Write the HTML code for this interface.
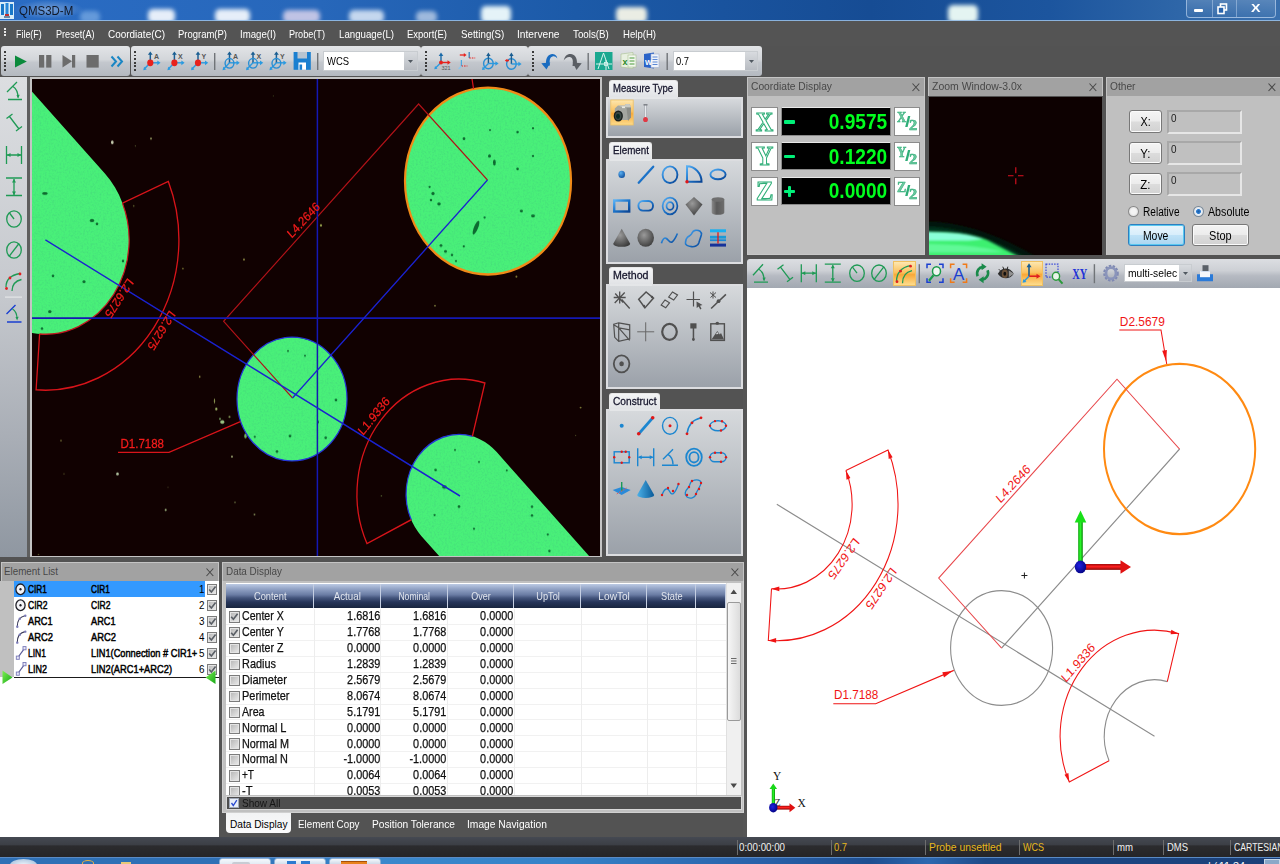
<!DOCTYPE html><html><head><meta charset="utf-8"><title>QMS3D-M</title><style>
*{box-sizing:border-box;margin:0;padding:0}
html,body{width:1280px;height:864px;overflow:hidden;background:#535353;font-family:"Liberation Sans",sans-serif;}
#app{position:absolute;left:0;top:0;width:1280px;height:864px;overflow:hidden;background:#535353}
#app div{position:absolute}
.t{position:absolute;white-space:nowrap;line-height:1;color:#000}
svg{position:absolute;overflow:visible}
.ph{background:#a2a2a2;border:1px solid #c4c4c4;border-bottom:none}
.pb{background:#c0c0c0}
.tab{background:linear-gradient(#f4f5f6,#dfe1e4);border:1px solid #e8e8e8;border-bottom:none;border-radius:3px 3px 0 0}
.box{background:linear-gradient(#d6d9dc,#9ba1a9);border:2px solid #dcdde0}
</style></head><body><div id="app">
<!-- s_top -->
<div style="left:0px;top:0px;width:1280px;height:21px;overflow:hidden;background:linear-gradient(90deg,#2a6cc4 0%,#2767ba 25%,#1c5aa8 45%,#164c94 68%,#1c559e 82%,#2e66a8 92%,#3a70ae 100%);"><div style="left:80px;top:11px;width:20px;height:12px;background:rgba(140,185,235,.6);border-radius:5px;filter:blur(2.2px)"></div><div style="left:148px;top:9px;width:27px;height:14px;background:rgba(240,246,252,.95);border-radius:5px;filter:blur(2.2px)"></div><div style="left:215px;top:9px;width:35px;height:14px;background:rgba(240,246,252,.95);border-radius:5px;filter:blur(2.2px)"></div><div style="left:283px;top:10px;width:37px;height:13px;background:rgba(218,212,236,.85);border-radius:5px;filter:blur(2.2px)"></div><div style="left:349px;top:10px;width:35px;height:13px;background:rgba(225,235,248,.85);border-radius:5px;filter:blur(2.2px)"></div><div style="left:416px;top:11px;width:21px;height:12px;background:rgba(200,215,235,.75);border-radius:5px;filter:blur(2.2px)"></div><div style="left:481px;top:6px;width:30px;height:17px;background:rgba(235,248,250,.97);border-radius:5px;filter:blur(2.2px)"></div><div style="left:616px;top:7px;width:31px;height:16px;background:rgba(246,246,232,.95);border-radius:5px;filter:blur(2.2px)"></div><div style="left:948px;top:5px;width:30px;height:18px;background:rgba(235,250,245,.97);border-radius:5px;filter:blur(2.2px)"></div><div style="left:14px;top:0px;width:70px;height:19px;background:radial-gradient(ellipse at center,rgba(255,255,255,.35),rgba(255,255,255,0) 70%)"></div></div><div style="left:0px;top:19.5px;width:1280px;height:1.1px;background:rgba(150,188,228,.9)"></div><div style="left:0px;top:20.6px;width:1280px;height:0.6px;background:#34404e"></div><svg style="left:0;top:2px" width="14" height="17" viewBox="0 0 14 17"><rect x="0" y="0" width="14" height="17" fill="#d8ecf8"/><rect x="1" y="2" width="3" height="11" fill="#1a78c8"/><rect x="5.5" y="1" width="3" height="11" fill="#2a88d8"/><rect x="10" y="2" width="3" height="11" fill="#1a78c8"/><rect x="5" y="12" width="4" height="2" fill="#c03030"/><rect x="4" y="14" width="6" height="2" fill="#6a8aa8"/></svg><span class="t" style="top:4.00px;font-size:13px;left:18.80px;transform-origin:0 0;transform:scaleX(0.883);color:#101828;">QMS3D-M</span><div style="left:1186px;top:-3px;width:90px;height:21px;border:1px solid rgba(200,220,245,.6);border-radius:0 0 4px 4px;background:linear-gradient(rgba(255,255,255,.18),rgba(255,255,255,.03))"></div><div style="left:1212px;top:0px;width:1px;height:17px;background:rgba(200,220,245,.45)"></div><div style="left:1236px;top:0px;width:1px;height:17px;background:rgba(200,220,245,.45)"></div><div style="left:1194px;top:9px;width:9px;height:3px;background:#fff;border-radius:1px"></div><svg style="left:1217px;top:3px" width="12" height="12" viewBox="0 0 12 12"><rect x="3.5" y="1" width="6" height="6" fill="none" stroke="#fff" stroke-width="1.6"/><rect x="1" y="4" width="6" height="6.5" fill="#2a64ac" stroke="#fff" stroke-width="1.6"/></svg><span class="t" style="top:3.29px;font-size:11px;left:1252.33px;transform-origin:50% 0;transform:scaleX(1.295);color:#fff;font-weight:bold;">X</span><div style="left:0px;top:21px;width:1280px;height:25px;background:#545454"></div><div style="left:4px;top:28px;width:2px;height:2px;background:#e8e8e8"></div><div style="left:4px;top:31px;width:2px;height:2px;background:#e8e8e8"></div><div style="left:4px;top:34px;width:2px;height:2px;background:#e8e8e8"></div><span class="t" style="top:28.59px;font-size:11px;left:15.60px;transform-origin:0 0;transform:scaleX(0.809);color:#fff;">File(F)</span><span class="t" style="top:28.59px;font-size:11px;left:55.50px;transform-origin:0 0;transform:scaleX(0.829);color:#fff;">Preset(A)</span><span class="t" style="top:28.59px;font-size:11px;left:107.50px;transform-origin:0 0;transform:scaleX(0.905);color:#fff;">Coordiate(C)</span><span class="t" style="top:28.59px;font-size:11px;left:177.50px;transform-origin:0 0;transform:scaleX(0.862);color:#fff;">Program(P)</span><span class="t" style="top:28.59px;font-size:11px;left:239.50px;transform-origin:0 0;transform:scaleX(0.879);color:#fff;">Image(I)</span><span class="t" style="top:28.59px;font-size:11px;left:289.00px;transform-origin:0 0;transform:scaleX(0.829);color:#fff;">Probe(T)</span><span class="t" style="top:28.59px;font-size:11px;left:338.80px;transform-origin:0 0;transform:scaleX(0.882);color:#fff;">Language(L)</span><span class="t" style="top:28.59px;font-size:11px;left:407.00px;transform-origin:0 0;transform:scaleX(0.861);color:#fff;">Export(E)</span><span class="t" style="top:28.59px;font-size:11px;left:460.50px;transform-origin:0 0;transform:scaleX(0.885);color:#fff;">Setting(S)</span><span class="t" style="top:28.59px;font-size:11px;left:517.00px;transform-origin:0 0;transform:scaleX(0.927);color:#fff;">Intervene</span><span class="t" style="top:28.59px;font-size:11px;left:573.00px;transform-origin:0 0;transform:scaleX(0.887);color:#fff;">Tools(B)</span><span class="t" style="top:28.59px;font-size:11px;left:622.50px;transform-origin:0 0;transform:scaleX(0.871);color:#fff;">Help(H)</span><div style="left:1px;top:46px;width:129px;height:30px;background:linear-gradient(#e2e4e7 0%,#d3d6da 45%,#c3c7cd 55%,#b4b9c0 100%);border-radius:3px;"></div><div style="left:131px;top:46px;width:290px;height:30px;background:linear-gradient(#e2e4e7 0%,#d3d6da 45%,#c3c7cd 55%,#b4b9c0 100%);border-radius:3px;"></div><div style="left:421px;top:46px;width:107px;height:30px;background:linear-gradient(#e2e4e7 0%,#d3d6da 45%,#c3c7cd 55%,#b4b9c0 100%);border-radius:3px;"></div><div style="left:528px;top:46px;width:233.5px;height:30px;background:linear-gradient(#e2e4e7 0%,#d3d6da 45%,#c3c7cd 55%,#b4b9c0 100%);border-radius:3px;"></div><div style="left:4px;top:51.0px;width:1.6px;height:1.8px;background:#3a3a3a"></div><div style="left:4px;top:54.6px;width:1.6px;height:1.8px;background:#3a3a3a"></div><div style="left:4px;top:58.2px;width:1.6px;height:1.8px;background:#3a3a3a"></div><div style="left:4px;top:61.8px;width:1.6px;height:1.8px;background:#3a3a3a"></div><div style="left:4px;top:65.4px;width:1.6px;height:1.8px;background:#3a3a3a"></div><div style="left:4px;top:69.0px;width:1.6px;height:1.8px;background:#3a3a3a"></div><div style="left:134px;top:51.0px;width:1.6px;height:1.8px;background:#3a3a3a"></div><div style="left:134px;top:54.6px;width:1.6px;height:1.8px;background:#3a3a3a"></div><div style="left:134px;top:58.2px;width:1.6px;height:1.8px;background:#3a3a3a"></div><div style="left:134px;top:61.8px;width:1.6px;height:1.8px;background:#3a3a3a"></div><div style="left:134px;top:65.4px;width:1.6px;height:1.8px;background:#3a3a3a"></div><div style="left:134px;top:69.0px;width:1.6px;height:1.8px;background:#3a3a3a"></div><div style="left:425px;top:51.0px;width:1.6px;height:1.8px;background:#3a3a3a"></div><div style="left:425px;top:54.6px;width:1.6px;height:1.8px;background:#3a3a3a"></div><div style="left:425px;top:58.2px;width:1.6px;height:1.8px;background:#3a3a3a"></div><div style="left:425px;top:61.8px;width:1.6px;height:1.8px;background:#3a3a3a"></div><div style="left:425px;top:65.4px;width:1.6px;height:1.8px;background:#3a3a3a"></div><div style="left:425px;top:69.0px;width:1.6px;height:1.8px;background:#3a3a3a"></div><div style="left:532px;top:51.0px;width:1.6px;height:1.8px;background:#3a3a3a"></div><div style="left:532px;top:54.6px;width:1.6px;height:1.8px;background:#3a3a3a"></div><div style="left:532px;top:58.2px;width:1.6px;height:1.8px;background:#3a3a3a"></div><div style="left:532px;top:61.8px;width:1.6px;height:1.8px;background:#3a3a3a"></div><div style="left:532px;top:65.4px;width:1.6px;height:1.8px;background:#3a3a3a"></div><div style="left:532px;top:69.0px;width:1.6px;height:1.8px;background:#3a3a3a"></div><svg id="tbicons" style="left:0;top:46px" width="760" height="30" viewBox="0 46 760 30"><path d="M15 55.5V67.5L26.8 61.5z" fill="#0b8a3c"/><rect x="39" y="55" width="5.2" height="12.6" fill="#6c6c6c"/><rect x="46.2" y="55" width="5.2" height="12.6" fill="#6c6c6c"/><path d="M62.5 55V67.6L72 61.3z" fill="#6c6c6c"/><rect x="72" y="55" width="3.2" height="12.6" fill="#6c6c6c"/><rect x="86.5" y="55" width="12.2" height="12.6" fill="#6c6c6c"/><path d="M111.5 56.5L116 61.5L111.5 66.5M117.5 56.5L122 61.5L117.5 66.5" fill="none" stroke="#1a86c4" stroke-width="2"/><path d="M148.8 64.3L144.3 69.0" stroke="#2a9ae0" stroke-width="1.4"/><path d="M143.3 70.2l3.4 -.6l-2.6 -2.8z" fill="#2a9ae0"/><path d="M150.3 60.8V53.8" stroke="#1a5e92" stroke-width="1.5"/><path d="M147.9 54.8h4.8l-2.4 -3.4z" fill="#1a5e92"/><path d="M152.3 62.8H158.3" stroke="#2a9ae0" stroke-width="1.4"/><path d="M157.3 60.4v4.8l3.2 -2.4z" fill="#2a9ae0"/><ellipse cx="150.3" cy="62.8" rx="3.1" ry="3.4" fill="#e8211c"/><text x="153.9" y="59.4" font-size="7" font-weight="bold" fill="#555" font-family="Liberation Sans,sans-serif">A</text><path d="M172.9 64.3L168.4 69.0" stroke="#2a9ae0" stroke-width="1.4"/><path d="M167.4 70.2l3.4 -.6l-2.6 -2.8z" fill="#2a9ae0"/><path d="M174.4 60.8V53.8" stroke="#1a5e92" stroke-width="1.5"/><path d="M172.0 54.8h4.8l-2.4 -3.4z" fill="#1a5e92"/><path d="M176.4 62.8H182.4" stroke="#2a9ae0" stroke-width="1.4"/><path d="M181.4 60.4v4.8l3.2 -2.4z" fill="#2a9ae0"/><ellipse cx="174.4" cy="62.8" rx="3.1" ry="3.4" fill="#e8211c"/><text x="178.0" y="59.4" font-size="7" font-weight="bold" fill="#555" font-family="Liberation Sans,sans-serif">X</text><path d="M196.5 64.3L192 69.0" stroke="#2a9ae0" stroke-width="1.4"/><path d="M191 70.2l3.4 -.6l-2.6 -2.8z" fill="#2a9ae0"/><path d="M198 60.8V53.8" stroke="#1a5e92" stroke-width="1.5"/><path d="M195.6 54.8h4.8l-2.4 -3.4z" fill="#1a5e92"/><path d="M200 62.8H206" stroke="#2a9ae0" stroke-width="1.4"/><path d="M205 60.4v4.8l3.2 -2.4z" fill="#2a9ae0"/><ellipse cx="198" cy="62.8" rx="3.1" ry="3.4" fill="#e8211c"/><text x="201.6" y="59.4" font-size="7" font-weight="bold" fill="#555" font-family="Liberation Sans,sans-serif">Y</text><rect x="214" y="53" width="1.4" height="17" fill="#707478"/><path d="M229.5 62.8L223.5 69.0" stroke="#2a9ae0" stroke-width="1.4"/><path d="M222.5 70.2l3.4 -.6l-2.6 -2.8z" fill="#2a9ae0"/><path d="M229.5 62.8V53.8" stroke="#1a5e92" stroke-width="1.5"/><path d="M227.1 54.8h4.8l-2.4 -3.4z" fill="#1a5e92"/><path d="M229.5 62.8H237.5" stroke="#2a9ae0" stroke-width="1.4"/><path d="M236.5 60.4v4.8l3.2 -2.4z" fill="#2a9ae0"/><ellipse cx="229.5" cy="63.3" rx="4.4" ry="4.8" fill="none" stroke="#2a8fd4" stroke-width="1.4"/><text x="233.1" y="59.4" font-size="7" font-weight="bold" fill="#555" font-family="Liberation Sans,sans-serif">A</text><path d="M253 62.8L247 69.0" stroke="#2a9ae0" stroke-width="1.4"/><path d="M246 70.2l3.4 -.6l-2.6 -2.8z" fill="#2a9ae0"/><path d="M253 62.8V53.8" stroke="#1a5e92" stroke-width="1.5"/><path d="M250.6 54.8h4.8l-2.4 -3.4z" fill="#1a5e92"/><path d="M253 62.8H261" stroke="#2a9ae0" stroke-width="1.4"/><path d="M260 60.4v4.8l3.2 -2.4z" fill="#2a9ae0"/><ellipse cx="253" cy="63.3" rx="4.4" ry="4.8" fill="none" stroke="#2a8fd4" stroke-width="1.4"/><text x="256.6" y="59.4" font-size="7" font-weight="bold" fill="#555" font-family="Liberation Sans,sans-serif">X</text><path d="M276.4 62.8L270.4 69.0" stroke="#2a9ae0" stroke-width="1.4"/><path d="M269.4 70.2l3.4 -.6l-2.6 -2.8z" fill="#2a9ae0"/><path d="M276.4 62.8V53.8" stroke="#1a5e92" stroke-width="1.5"/><path d="M274.0 54.8h4.8l-2.4 -3.4z" fill="#1a5e92"/><path d="M276.4 62.8H284.4" stroke="#2a9ae0" stroke-width="1.4"/><path d="M283.4 60.4v4.8l3.2 -2.4z" fill="#2a9ae0"/><ellipse cx="276.4" cy="63.3" rx="4.4" ry="4.8" fill="none" stroke="#2a8fd4" stroke-width="1.4"/><text x="280.0" y="59.4" font-size="7" font-weight="bold" fill="#555" font-family="Liberation Sans,sans-serif">Y</text><path d="M293.6 52h17.2v17.8h-17.2z" fill="#1a7fd0"/><rect x="297.5" y="52" width="9.5" height="6.5" fill="#b8c4d0"/><rect x="298.5" y="62.5" width="7.5" height="7.3" fill="#fff"/><rect x="299.5" y="64.5" width="2.6" height="5.3" fill="#1a7fd0"/><rect x="317" y="53" width="1.4" height="17" fill="#707478"/><path d="M441 62.500V55" stroke="#1a6aa8" stroke-width="1.400"/><path d="M438.700 56h4.600l-2.300 -3.400z" fill="#1a6aa8"/><path d="M441 62.500H448.500" stroke="#e8211c" stroke-width="1.400"/><path d="M447.500 60.200v4.600l3.200 -2.300z" fill="#e8211c"/><path d="M441 62.500L435.500 68" stroke="#2a9ae0" stroke-width="1.300"/><path d="M434.300 69.300l3.200 -.6l-2.500 -2.600z" fill="#2a9ae0"/><circle cx="441" cy="62.500" r="1.900" fill="#e8211c"/><text x="441.500" y="70.300" font-size="5.500" fill="#555" font-family="Liberation Sans,sans-serif">321</text><path d="M459.800 55h4.500" stroke="#e8211c" stroke-width="1.300"/><path d="M463.800 53v4l2.800 -2z" fill="#e8211c"/><path d="M469.200 58v-6" stroke="#2a7ab8" stroke-width="1.200"/><path d="M469.200 58h6" stroke="#e8211c" stroke-width="1.200" stroke-dasharray="1.600 1"/><path d="M461.400 66v-6" stroke="#4aa8e0" stroke-width="1.200"/><path d="M461.400 66h6" stroke="#e8211c" stroke-width="1.200" stroke-dasharray="1.600 1"/><path d="M461.400 66l-2.800 3" stroke="#8ac8f0" stroke-width="1.200"/><ellipse cx="488.4" cy="63.5" rx="4.800" ry="5.200" fill="none" stroke="#2a8fd4" stroke-width="1.400"/><path d="M488.4 63.5V55" stroke="#1a5e92" stroke-width="1.400"/><path d="M486.2 56h4.400l-2.200 -3.400z" fill="#1a5e92"/><path d="M488.4 63.5H495.9" stroke="#2a9ae0" stroke-width="1.400"/><path d="M495.4 61.2v4.600l3.200 -2.300z" fill="#2a9ae0"/><ellipse cx="511.4" cy="64" rx="4.800" ry="5.200" fill="none" stroke="#2a8fd4" stroke-width="1.400"/><path d="M511.4 64V55" stroke="#1a5e92" stroke-width="1.400"/><path d="M509.2 56h4.400l-2.200 -3.400z" fill="#1a5e92"/><path d="M511.4 64H518.9" stroke="#2a9ae0" stroke-width="1.400"/><path d="M518.4 61.7v4.600l3.200 -2.300z" fill="#2a9ae0"/><path d="M488.400 63.500l-5 5" stroke="#2a9ae0" stroke-width="1.300"/><path d="M482 70l3.200 -.6l-2.500 -2.600z" fill="#2a9ae0"/><path d="M509 60.500h-2" stroke="#e8211c" stroke-width="1.300"/><path d="M507.300 58.700v3.600l-2.500 -1.800z" fill="#e8211c"/><path d="M546.500 66c-1.500 -6 .5 -11.500 5.500 -12c3.500 -.3 5 2 5.300 4.500c-1.500 -2 -3 -2.500 -4.800 -2c-2.800 .8 -3.300 4.500 -2.500 9z" fill="#1a6cc0"/><path d="M541.300 63.200l9 -.7l-3.800 7z" fill="#1a6cc0"/><path d="M576.500 66c1.500 -6 -.5 -11.500 -5.500 -12c-4 -.3 -6.500 2.500 -7.300 6.500c1.800 -2.500 3.800 -4 6.300 -3.500c3 .8 3.300 4.500 2.500 9z" fill="#5a5e64"/><path d="M581.700 63.200l-9 -.7l3.800 7.500z" fill="#5a5e64"/><rect x="587.500" y="53" width="1.400" height="17" fill="#707478"/><rect x="595" y="52" width="17.500" height="18" fill="#1aa890"/><path d="M598 69L603.500 53L609 69M596 64h16M606 60v10" stroke="#d8f4ee" stroke-width="1" fill="none"/><rect x="604.500" y="62.500" width="3" height="3" fill="none" stroke="#d8f4ee" stroke-width=".8"/><path d="M621 54l12 -1.500v16l-12 -1.500z" fill="#e8f0e0" stroke="#a8c090" stroke-width=".6"/><rect x="628" y="55" width="8" height="12" fill="#f4f8f0" stroke="#a8c090" stroke-width=".6"/><path d="M629.500 58h5M629.500 61h5M629.500 64h5" stroke="#4a9a3a" stroke-width="1.200"/><text x="622.500" y="65" font-size="9" font-weight="bold" fill="#2a8a2a" font-family="Liberation Sans,sans-serif">x</text><path d="M644 54l10 -1.500v16l-10 -1.500z" fill="#2a62c8"/><rect x="651" y="54" width="8" height="13.500" fill="#f0f4fa" stroke="#a0b0d0" stroke-width=".6"/><path d="M652.500 57h5M652.500 59.500h5M652.500 62h5M652.500 64.500h5" stroke="#4a7ad0" stroke-width=".9"/><text x="645" y="64.500" font-size="7.500" font-weight="bold" fill="#fff" font-family="Liberation Sans,sans-serif">W</text><rect x="666.500" y="53" width="1.400" height="17" fill="#707478"/></svg><div style="left:323px;top:51px;width:95px;height:20px;background:#fff;border:1px solid #c8ccd0"></div><div style="left:404px;top:52px;width:13px;height:18px;background:linear-gradient(#d8dbdf,#b8bcc2)"></div><svg style="left:408px;top:59.500px" width="5" height="3"><path d="M0 0h5l-2.500 3z" fill="#505860"/></svg><span class="t" style="top:55.87px;font-size:11.5px;left:327.00px;transform-origin:0 0;transform:scaleX(0.820);color:#000;">WCS</span><div style="left:673px;top:51px;width:85px;height:20px;background:#fff;border:1px solid #c8ccd0"></div><div style="left:745px;top:52px;width:12px;height:18px;background:linear-gradient(#d8dbdf,#b8bcc2)"></div><svg style="left:749px;top:59.500px" width="5" height="3"><path d="M0 0h5l-2.500 3z" fill="#505860"/></svg><span class="t" style="top:55.87px;font-size:11.5px;left:676.00px;transform-origin:0 0;transform:scaleX(0.813);color:#000;">0.7</span>
<!-- s_cam -->
<div style="left:0px;top:77px;width:27px;height:480px;background:linear-gradient(#dcdee1 0%,#c6c9ce 45%,#a9aeb6 75%,#8f97a1 100%)"></div><div style="left:27px;top:77px;width:3px;height:480px;background:#5e5e5e"></div><svg style="left:0;top:77px" width="27" height="260" viewBox="0 77 27 260"><path d="M7 92L17 82M8 99.500H22M13 86.500c3 2 5 6 5 11" fill="none" stroke="#1f9a55" stroke-width="1.300"/><path d="M16.500 95l1.600 3.500l1.600 -3.800z" fill="#1f9a55"/><path d="M9.500 116.500L19 129M6.500 118.500l6 -4.500M16 131l6 -4.500" fill="none" stroke="#1f9a55" stroke-width="1.300"/><path d="M6.500 146V164M21.500 146V164M7 155H21" stroke="#1f9a55" stroke-width="1.300" fill="none"/><path d="M7 155l3.500 -2v4zM21 155l-3.500 -2v4z" fill="#1f9a55"/><path d="M6 178H22M6 195.500H22M14 179V195" stroke="#1f9a55" stroke-width="1.300" fill="none"/><path d="M14 179l-2 3.500h4zM14 195l-2 -3.500h4z" fill="#1f9a55"/><ellipse cx="14" cy="219" rx="7.300" ry="8.200" fill="none" stroke="#1f9a55" stroke-width="1.300"/><path d="M14 219L9.500 213" stroke="#1f9a55" stroke-width="1.300"/><ellipse cx="14" cy="250" rx="7.300" ry="8.200" fill="none" stroke="#1f9a55" stroke-width="1.300"/><path d="M9 256.500L19 243.500" stroke="#1f9a55" stroke-width="1.300"/><path d="M6 287c0 -7 5 -12 14 -13.500M12 291c0 -6 3 -10 9.500 -11.500" fill="none" stroke="#1f9a55" stroke-width="1.300"/><circle cx="6.500" cy="288.500" r="1.400" fill="#e02020"/><circle cx="10" cy="278" r="1.400" fill="#e02020"/><circle cx="20" cy="274" r="1.400" fill="#e02020"/><rect x="5" y="296.500" width="17" height="1.200" fill="#e4e6e8"/><path d="M6.500 314L15.500 305M7 322H21.500" fill="none" stroke="#1a3fd0" stroke-width="1.400"/><path d="M12.500 309c3 2 4.500 5 4.500 9.500" fill="none" stroke="#1f9a55" stroke-width="1.200"/><path d="M15.500 317l1.600 3.500l1.500 -3.800z" fill="#1f9a55"/></svg><div style="left:30px;top:77px;width:572px;height:480px;background:#c4c4c4"></div><div style="left:32px;top:79px;width:568px;height:477px;background:#110101;overflow:hidden"><svg style="left:0;top:0" width="568" height="477" viewBox="32 79 568 477"><defs><filter id="bl" x="-5%" y="-5%" width="110%" height="110%"><feGaussianBlur stdDeviation="0.7"/></filter><filter id="nz" x="0" y="0" width="100%" height="100%" filterUnits="objectBoundingBox"><feTurbulence type="fractalNoise" baseFrequency="0.55" numOctaves="2" seed="4" result="t"/><feColorMatrix in="t" type="matrix" values="0 0 0 0 0.05  0 0 0 0 0.55  0 0 0 0 0.2  0 0 0 0.8 -0.33"/><feComposite in2="SourceGraphic" operator="in"/></filter><filter id="bl2" x="-5%" y="-5%" width="110%" height="110%"><feGaussianBlur stdDeviation="0.45"/></filter></defs><g transform="scale(1,1.125)"><g filter="url(#bl)"><path d="M45.4 213.3l-300 -300" stroke="#49f079" stroke-width="167.6" stroke-linecap="round"/><circle cx="488" cy="160.9" r="83" fill="#49f079"/><circle cx="292" cy="354.7" r="55" fill="#49f079"/><path d="M459 439.1l300 300" stroke="#49f079" stroke-width="106" stroke-linecap="round"/></g><g filter="url(#nz)"><path d="M45.4 213.3l-300 -300" stroke="#000" stroke-width="165.6" stroke-linecap="round"/><circle cx="488" cy="160.9" r="82" fill="#000"/><circle cx="292" cy="354.7" r="54" fill="#000"/><path d="M459 439.1l300 300" stroke="#000" stroke-width="104" stroke-linecap="round"/></g><g filter="url(#bl2)"><ellipse cx="44.9" cy="172.0" rx="2.8" ry="1.3" fill="#0c6a30"/><ellipse cx="92" cy="196.0" rx="2.2" ry="1.4" fill="#0c6a30"/><ellipse cx="97" cy="199.1" rx="1.3" ry="1.3" fill="#0c6a30"/><ellipse cx="53" cy="245.3" rx="1.3" ry="1.2" fill="#0c6a30"/><ellipse cx="84" cy="250.5" rx="1.6" ry="1.2" fill="#0c6a30"/><ellipse cx="49.8" cy="277.0" rx="1.7" ry="1.4" fill="#0c6a30"/><ellipse cx="123" cy="232.0" rx="1.2" ry="1.2" fill="#0c6a30"/><ellipse cx="42" cy="292.1" rx="1.2" ry="1.1" fill="#0c6a30"/><ellipse cx="464" cy="123.2" rx="1.3" ry="1.4" fill="#0c6a30"/><ellipse cx="489.5" cy="138.7" rx="1.5" ry="1.4" fill="#0c6a30"/><ellipse cx="494.4" cy="144.5" rx="1.4" ry="2.7" fill="#0c6a30"/><ellipse cx="517.6" cy="117.5" rx="1.2" ry="1.1" fill="#0c6a30"/><ellipse cx="533" cy="114.1" rx="1.1" ry="1.0" fill="#0c6a30"/><ellipse cx="490" cy="115.6" rx="1" ry="0.9" fill="#0c6a30"/><ellipse cx="533" cy="138.7" rx="1.1" ry="1.0" fill="#0c6a30"/><ellipse cx="517.6" cy="150.2" rx="1.3" ry="1.2" fill="#0c6a30"/><ellipse cx="429.6" cy="166.2" rx="1.1" ry="1.0" fill="#0c6a30"/><ellipse cx="433" cy="172.0" rx="1.6" ry="1.4" fill="#0c6a30"/><ellipse cx="431" cy="177.8" rx="1.2" ry="1.1" fill="#0c6a30"/><ellipse cx="439" cy="181.3" rx="1.7" ry="1.5" fill="#0c6a30"/><ellipse cx="476" cy="202.4" rx="2" ry="6.7" fill="#0c6a30" transform="rotate(25 476 202.4)"/><ellipse cx="484.6" cy="193.4" rx="1.1" ry="1.0" fill="#0c6a30"/><ellipse cx="521.4" cy="187.6" rx="1.6" ry="1.2" fill="#0c6a30"/><ellipse cx="533" cy="192.0" rx="2" ry="1.3" fill="#0c6a30"/><ellipse cx="441" cy="218.3" rx="1.4" ry="1.2" fill="#0c6a30"/><ellipse cx="445.5" cy="223.5" rx="1.4" ry="1.2" fill="#0c6a30"/><ellipse cx="452" cy="226.7" rx="1.2" ry="1.1" fill="#0c6a30"/><ellipse cx="456" cy="232.0" rx="1.1" ry="1.0" fill="#0c6a30"/><ellipse cx="463.8" cy="219.1" rx="1.1" ry="1.0" fill="#0c6a30"/><ellipse cx="288" cy="311.9" rx="1" ry="0.9" fill="#0c6a30"/><ellipse cx="305" cy="316.3" rx="1" ry="0.9" fill="#0c6a30"/><ellipse cx="336" cy="355.6" rx="1.3" ry="1.2" fill="#0c6a30"/><ellipse cx="325.7" cy="389.2" rx="1.3" ry="1.2" fill="#0c6a30"/><ellipse cx="290" cy="387.6" rx="1.4" ry="1.2" fill="#0c6a30"/><ellipse cx="277" cy="401.4" rx="1.3" ry="1.2" fill="#0c6a30"/><ellipse cx="254.8" cy="388.3" rx="1.1" ry="1.0" fill="#0c6a30"/><ellipse cx="318" cy="375.1" rx="1" ry="1.4" fill="#0c6a30"/><ellipse cx="444.4" cy="432.9" rx="2.3" ry="1.5" fill="#0c6a30"/><ellipse cx="435.6" cy="417.8" rx="1.3" ry="1.2" fill="#0c6a30"/><ellipse cx="455" cy="400.0" rx="1" ry="0.9" fill="#0c6a30"/><ellipse cx="479" cy="410.7" rx="1" ry="0.9" fill="#0c6a30"/><ellipse cx="506.8" cy="418.3" rx="1" ry="0.9" fill="#0c6a30"/><ellipse cx="459" cy="450.4" rx="1.3" ry="1.2" fill="#0c6a30"/><ellipse cx="434.6" cy="457.8" rx="1.1" ry="1.0" fill="#0c6a30"/><ellipse cx="532" cy="450.4" rx="1.2" ry="1.1" fill="#0c6a30"/><ellipse cx="532" cy="458.3" rx="1.2" ry="1.1" fill="#0c6a30"/><ellipse cx="474" cy="470.0" rx="1.1" ry="1.0" fill="#0c6a30"/><ellipse cx="547.8" cy="475.2" rx="1.1" ry="1.0" fill="#0c6a30"/><ellipse cx="549.4" cy="489.8" rx="1.2" ry="1.1" fill="#0c6a30"/></g><ellipse cx="112.3" cy="126.5" rx="1.36" ry="1.64" fill="#f0fad8" opacity=".8"/><ellipse cx="151" cy="123.2" rx="0.88" ry="1.07" fill="#a8b070" opacity=".8"/><ellipse cx="135.4" cy="129.8" rx="0.64" ry="0.64" fill="#606838" opacity=".8"/><ellipse cx="133.7" cy="183.1" rx="0.80" ry="0.78" fill="#6a7038" opacity=".8"/><ellipse cx="244" cy="230.7" rx="0.96" ry="1.00" fill="#a0a050" opacity=".8"/><ellipse cx="182.9" cy="238.7" rx="0.80" ry="0.78" fill="#909040" opacity=".8"/><ellipse cx="273.4" cy="85.3" rx="0.64" ry="0.57" fill="#404820" opacity=".8"/><ellipse cx="321" cy="200.4" rx="1.04" ry="1.07" fill="#b8c860" opacity=".8"/><ellipse cx="516.4" cy="245.9" rx="0.96" ry="0.92" fill="#909040" opacity=".8"/><ellipse cx="435" cy="271.8" rx="0.96" ry="0.85" fill="#808040" opacity=".8"/><ellipse cx="580.6" cy="362.3" rx="0.96" ry="0.85" fill="#909040" opacity=".8"/><ellipse cx="575.6" cy="387.1" rx="0.64" ry="0.57" fill="#505028" opacity=".8"/><ellipse cx="199.7" cy="334.9" rx="0.80" ry="0.92" fill="#a0a050" opacity=".8"/><ellipse cx="214.5" cy="356.4" rx="0.64" ry="2.28" fill="#a0b060" opacity=".8"/><ellipse cx="216.3" cy="363.6" rx="1.12" ry="1.21" fill="#c0e080" opacity=".8"/><ellipse cx="222.3" cy="375.1" rx="2.08" ry="1.71" fill="#b8f0a0" opacity=".8"/><ellipse cx="220" cy="372.4" rx="0.96" ry="0.85" fill="#90d080" opacity=".8"/><ellipse cx="229.5" cy="370.6" rx="1.04" ry="0.92" fill="#a0c070" opacity=".8"/><ellipse cx="245.5" cy="387.6" rx="1.28" ry="2.13" fill="#8ae07a" opacity=".8"/><ellipse cx="232" cy="405.9" rx="1.04" ry="0.92" fill="#c0d090" opacity=".8"/><ellipse cx="117.5" cy="421.3" rx="1.36" ry="1.35" fill="#d8f4c8" opacity=".8"/><ellipse cx="61" cy="391.7" rx="0.80" ry="0.92" fill="#808040" opacity=".8"/><ellipse cx="64" cy="421.2" rx="0.72" ry="0.71" fill="#606030" opacity=".8"/><ellipse cx="165.7" cy="453.3" rx="1.04" ry="1.00" fill="#c0e0a0" opacity=".8"/><ellipse cx="168" cy="433.2" rx="0.64" ry="0.57" fill="#505030" opacity=".8"/><ellipse cx="235" cy="446.6" rx="0.80" ry="0.71" fill="#90a060" opacity=".8"/><ellipse cx="254.5" cy="457.3" rx="0.96" ry="0.85" fill="#a0b070" opacity=".8"/><ellipse cx="38.5" cy="492.9" rx="0.80" ry="0.71" fill="#606030" opacity=".8"/><ellipse cx="381.4" cy="440.8" rx="0.80" ry="0.71" fill="#506030" opacity=".8"/><circle cx="488" cy="160.9" r="83" fill="none" stroke="#f08a18" stroke-width="2.200"/><circle cx="292" cy="354.7" r="55" fill="none" stroke="#2436d8" stroke-width="1.200"/><path d="M411.4 462.3A53 53 0 0 1 472.7 387.9" fill="none" stroke="#2436d8" stroke-width="1.200"/><path d="M122.5 180.6A83.8 83.8 0 0 1 39.6 296.9" fill="none" stroke="#c01820" stroke-width="1.200"/><path d="M122.5 180.6L168.3 161.2A133.5 133.5 0 0 1 36.1 346.5L39.6 296.9" fill="none" stroke="#d8141a" stroke-width="1.300"/><path d="M411.2 462.0L367.0 483.2A102 102 0 0 1 484.9 340.4L472.4 387.8" fill="none" stroke="#d8141a" stroke-width="1.300"/><path d="M487.500 160.0L418.600 92.4L223.600 285.6L292.500 353.8" fill="none" stroke="#b01218" stroke-width="1.100"/><path d="M472 70.2L473.600 78.9" stroke="#d8141a" stroke-width="1.200"/><path d="M118 402.1H169L240.400 374.8" fill="none" stroke="#d8141a" stroke-width="1.300"/><path d="M317.400 70.2V494.2M32 282.7H600" stroke="#1418b4" stroke-width="1.500"/><path d="M45.400 213.3L460 440.9M487.500 160.0L292.500 353.8" stroke="#1a22d0" stroke-width="1.300"/><text x="0" y="0" transform="translate(120.5 397.9) rotate(0)" font-size="12" fill="#f41c1c" stroke="#f41c1c" stroke-width=".25" textLength="43.5" lengthAdjust="spacingAndGlyphs">D1.7188</text><text x="0" y="0" transform="translate(291.8 212.3) rotate(-44)" font-size="11.5" fill="#f41c1c" stroke="#f41c1c" stroke-width=".25" textLength="40" lengthAdjust="spacingAndGlyphs">L4.2646</text><text x="0" y="0" transform="translate(127.8 246.6) rotate(125.8)" font-size="11.5" fill="#f41c1c" stroke="#f41c1c" stroke-width=".25" textLength="40" lengthAdjust="spacingAndGlyphs">L2.6275</text><text x="0" y="0" transform="translate(169.4 275.4) rotate(124.6)" font-size="11.5" fill="#f41c1c" stroke="#f41c1c" stroke-width=".25" textLength="39.5" lengthAdjust="spacingAndGlyphs">L2.6275</text><text x="0" y="0" transform="translate(363.1 387.5) rotate(-48)" font-size="11.5" fill="#f41c1c" stroke="#f41c1c" stroke-width=".25" textLength="41" lengthAdjust="spacingAndGlyphs">L1.9336</text></g></svg></div>
<!-- s_mid -->
<div class="tab" style="left:608.5px;top:80px;width:69.5px;height:19px;"></div><div class="box" style="left:605.5px;top:97px;width:137.5px;height:40.7px;"></div><div style="left:609.5px;top:97px;width:67.5px;height:2px;background:#e4e6e8"></div><span class="t" style="top:82.87px;font-size:11.5px;left:612.50px;transform-origin:0 0;transform:scaleX(0.826);color:#16162c;-webkit-text-stroke:.3px #16162c;">Measure Type</span><div class="tab" style="left:608.5px;top:142.3px;width:43.5px;height:18.19999999999999px;"></div><div class="box" style="left:605.5px;top:158.5px;width:137.5px;height:105px;"></div><div style="left:609.5px;top:158.5px;width:41.5px;height:2px;background:#e4e6e8"></div><span class="t" style="top:145.17px;font-size:11.5px;left:612.50px;transform-origin:0 0;transform:scaleX(0.853);color:#16162c;-webkit-text-stroke:.3px #16162c;">Element</span><div class="tab" style="left:608.5px;top:267.1px;width:44px;height:18.69999999999999px;"></div><div class="box" style="left:605.5px;top:283.8px;width:137.5px;height:105px;"></div><div style="left:609.5px;top:283.8px;width:42px;height:2px;background:#e4e6e8"></div><span class="t" style="top:269.97px;font-size:11.5px;left:612.50px;transform-origin:0 0;transform:scaleX(0.925);color:#16162c;-webkit-text-stroke:.3px #16162c;">Method</span><div class="tab" style="left:608.5px;top:392.7px;width:51.5px;height:18.19999999999999px;"></div><div class="box" style="left:605.5px;top:408.9px;width:137.5px;height:147.6px;"></div><div style="left:609.5px;top:408.9px;width:49.5px;height:2px;background:#e4e6e8"></div><span class="t" style="top:395.57px;font-size:11.5px;left:612.50px;transform-origin:0 0;transform:scaleX(0.884);color:#16162c;-webkit-text-stroke:.3px #16162c;">Construct</span><svg style="left:605px;top:97px" width="138" height="460" viewBox="605 97 138 460"><defs><linearGradient id="hl" x1="0" y1="0" x2="0" y2="1"><stop offset="0" stop-color="#fde7b0"/><stop offset=".45" stop-color="#fbc260"/><stop offset=".55" stop-color="#f9a838"/><stop offset="1" stop-color="#fddc8c"/></linearGradient><radialGradient id="sph" cx=".4" cy=".35" r=".7"><stop offset="0" stop-color="#9a9a9a"/><stop offset="1" stop-color="#3c3c3c"/></radialGradient><linearGradient id="cyl" x1="0" y1="0" x2="1" y2="0"><stop offset="0" stop-color="#8a8a8a"/><stop offset=".4" stop-color="#5a5a5a"/><stop offset="1" stop-color="#6e6e6e"/></linearGradient><linearGradient id="bcone" x1="0" y1="0" x2="1" y2="0"><stop offset="0" stop-color="#4ab0e8"/><stop offset="1" stop-color="#0a5a98"/></linearGradient><linearGradient id="bs" x1="0" y1="0" x2="1" y2="1"><stop offset="0" stop-color="#58b0f4"/><stop offset=".5" stop-color="#1b72c8"/><stop offset="1" stop-color="#0a4594"/></linearGradient><radialGradient id="bdot" cx=".35" cy=".3" r=".8"><stop offset="0" stop-color="#5ab0f0"/><stop offset="1" stop-color="#0a4a9a"/></radialGradient></defs><rect x="610.8" y="100" width="22.400" height="25" fill="url(#hl)" stroke="#f0c060" stroke-width=".8"/><path d="M614.800 108.500l3.200 -3h6.500l1.500 -1.500h3.500l1.500 3v9.500l-3 3.500h-9.500l-3.700 -2z" fill="#a4a6a0"/><path d="M618 105.500h6.500l1.500 -1.500h3.500l1.500 3h-9z" fill="#c8cac4"/><path d="M626.500 108h4.500v9.500l-3 3.500z" fill="#8c8e88"/><ellipse cx="618.300" cy="116" rx="4.600" ry="5.600" fill="#1a201e"/><ellipse cx="618.300" cy="116" rx="3.200" ry="4" fill="#3c4844"/><ellipse cx="618" cy="116.300" rx="2" ry="2.600" fill="#0a2a24"/><rect x="622" y="106.500" width="3" height="1.600" fill="#e8e8e0"/><rect x="644" y="104" width="3" height="13" fill="#b4b8be"/><rect x="645" y="104" width="1" height="13" fill="#e8eaee"/><rect x="643.500" y="104" width="4" height="1.600" fill="#80848a"/><ellipse cx="645.500" cy="119.500" rx="2.400" ry="2.600" fill="#e03844"/><ellipse cx="621.7" cy="174.39999999999998" rx="3.300" ry="3.600" fill="url(#bdot)"/><path d="M638.7 182.7L653.2 166.7" stroke="url(#bs)" stroke-width="2.300" stroke-linecap="round"/><ellipse cx="670" cy="174.7" rx="7.400" ry="8.300" fill="none" stroke="url(#bs)" stroke-width="1.900"/><path d="M687 181.7V166.2C695 166.2 701.5 173.7 701.5 181.7z" fill="none" stroke="url(#bs)" stroke-width="2"/><circle cx="687" cy="181.7" r="1.700" fill="#e01818"/><ellipse cx="718" cy="174.39999999999998" rx="7.600" ry="4.900" fill="none" stroke="url(#bs)" stroke-width="1.900"/><rect x="614.2" y="200.5" width="15" height="11" fill="none" stroke="url(#bs)" stroke-width="2.400"/><rect x="638.4000000000001" y="201" width="14.600" height="9.600" rx="4.500" fill="none" stroke="url(#bs)" stroke-width="1.900"/><ellipse cx="670" cy="206" rx="7.400" ry="8.300" fill="none" stroke="url(#bs)" stroke-width="1.700"/><ellipse cx="670" cy="206" rx="3.500" ry="3.900" fill="none" stroke="url(#bs)" stroke-width="1.700"/><path d="M694 197L702.5 204.5L694 215.5L685.5 204.5z" fill="url(#sph)"/><path d="M711.7 199.5v13a6.300 2.300 0 0 0 12.600 0v-13z" fill="url(#cyl)"/><ellipse cx="718" cy="199.5" rx="6.300" ry="2.300" fill="#6e6e6e"/><path d="M621.7 228.8L630.2 243.8a8.500 3 0 0 1 -17 0z" fill="url(#sph)"/><ellipse cx="645.7" cy="237.8" rx="8.300" ry="9" fill="url(#sph)"/><path d="M661.400 243.300C662.500 239 664.500 237 666.500 238.500S670 243.500 672 242S676 237 677.400 233.500" fill="none" stroke="url(#bs)" stroke-width="1.600"/><path d="M695 230.400C699 229.500 702 232 701.300 235C700.500 238 699.500 240 698.900 242.700C698 246 694 247 691.500 246.600C688 246.300 685 245 685.400 242.700C685.800 240 686 238.500 687.500 237.200C689 236 690.500 235.500 691.500 233.800C692.500 232 693 230.800 695 230.400z" fill="none" stroke="url(#bs)" stroke-width="1.600"/><rect x="710" y="229.3" width="16" height="3" fill="#1ab0f0"/><rect x="710" y="235.8" width="16" height="2.800" fill="#1a9ad8"/><rect x="710" y="239.3" width="16" height="1.800" fill="#1a8ad8"/><rect x="710" y="243.60000000000002" width="16" height="3" fill="#16329a"/><path d="M718 232.3V243.60000000000002" stroke="#e01818" stroke-width="1.300"/><path d="M615.2 293.5L623.2 302.5M624.7 292.5L614.7 303.0M619.7 291.5V303.5M613.7 297.5H625.7M621.7 299.5L629.7 308.5" stroke="#505050" stroke-width="1.300" fill="none"/><path d="M646.100 292L653.500 298.100L644.900 307.900L638.700 299.300z" fill="none" stroke="#505050" stroke-width="1.500"/><circle cx="652" cy="297" r="1.200" fill="#505050"/><circle cx="644" cy="306" r="1.200" fill="#505050"/><path d="M672.5 292.0l5 3l-3.800 5l-5 -3zM665 300.0l4.500 2.800l-3.800 5l-4.500 -2.800z" fill="none" stroke="#505050" stroke-width="1.200"/><path d="M686.5 299.5H700M693.5 291.5V306.5" stroke="#505050" stroke-width="1.200"/><path d="M696.5 301.5l6 3.500l-2.500 .8l1.500 3l-1.300 .6l-1.500 -3l-2 1.600z" fill="#505050"/><path d="M711.100 308.500L725.900 294.400" stroke="#505050" stroke-width="1.500"/><circle cx="718.500" cy="301.200" r="1.900" fill="#505050"/><path d="M710 292.500l6 5M716 292.500l-5.500 5M713 291.500v7" stroke="#505050" stroke-width="1" fill="none"/><path d="M613.7 324.3l5 -1.500l11 2v14l-11 2.500l-4 -4zM618.7 322.8l0 5l11 2M618.7 327.8l-5 -3M618.7 327.8v13.500M618.7 327.8l11 12.500" fill="none" stroke="#505050" stroke-width="1.200"/><path d="M637.2 331.8H654.2M645.7 322.3V341.3" stroke="#686868" stroke-width="1"/><ellipse cx="669.5" cy="331.8" rx="7.300" ry="8" fill="none" stroke="#505050" stroke-width="2.200"/><rect x="690.300" y="323.300" width="6.200" height="5.200" fill="#505050"/><rect x="692.700" y="328" width="1.500" height="11" fill="#505050"/><circle cx="693.400" cy="339.500" r="1.400" fill="#505050"/><rect x="710.800" y="323.800" width="13.600" height="16.600" fill="none" stroke="#505050" stroke-width="1.400"/><path d="M711.500 339.500l5.800 -8.500l2.500 3.500l1.200 -1.500l3 6.500z" fill="#505050"/><path d="M715.800 334.200l1.500 -2.200l1.300 2z" fill="#d0d3d7"/><ellipse cx="717.300" cy="323.300" rx="1.800" ry="1.500" fill="#505050"/><ellipse cx="621.600" cy="363.8" rx="7.800" ry="8.500" fill="none" stroke="#505050" stroke-width="1.800"/><ellipse cx="621.600" cy="363.8" rx="2.300" ry="2.500" fill="#505050"/><circle cx="621.7" cy="425.8" r="2" fill="#1b86d0"/><path d="M638.7 433.8L652.7 417.8" stroke="#1b86d0" stroke-width="2.800"/><circle cx="638.7" cy="433.8" r="1.800" fill="#e01818"/><circle cx="652.7" cy="417.8" r="1.800" fill="#e01818"/><ellipse cx="670" cy="425.8" rx="7.500" ry="8.400" fill="none" stroke="#1b86d0" stroke-width="1.400"/><circle cx="670" cy="425.8" r="1.500" fill="#e01818"/><path d="M687 433.8c1 -8 6 -14 14 -16" fill="none" stroke="#1b86d0" stroke-width="1.400"/><circle cx="687" cy="433.8" r="1.400" fill="#e01818"/><circle cx="692" cy="422.8" r="1.400" fill="#e01818"/><circle cx="701" cy="417.8" r="1.400" fill="#e01818"/><ellipse cx="718" cy="425.8" rx="8" ry="5" fill="none" stroke="#1b86d0" stroke-width="1.400"/><circle cx="710" cy="425.8" r="1.200" fill="#e01818"/><circle cx="726" cy="425.8" r="1.200" fill="#e01818"/><circle cx="715" cy="421.1" r="1.200" fill="#e01818"/><circle cx="721" cy="430.5" r="1.200" fill="#e01818"/><circle cx="722" cy="421.3" r="1.200" fill="#e01818"/><rect x="614.2" y="451.8" width="15" height="11" fill="none" stroke="#1b86d0" stroke-width="1.400"/><circle cx="614.2" cy="457.3" r="1.200" fill="#e01818"/><circle cx="629.2" cy="457.3" r="1.200" fill="#e01818"/><circle cx="621.7" cy="451.8" r="1.200" fill="#e01818"/><circle cx="621.7" cy="462.8" r="1.200" fill="#e01818"/><circle cx="625.7" cy="451.8" r="1.200" fill="#e01818"/><path d="M637.7 448.3V466.3M653.7 448.3V466.3M638.7 457.3H652.7" stroke="#1b86d0" stroke-width="1.400"/><path d="M638.2 457.3l3.500 -2v4zM653.2 457.3l-3.500 -2v4z" fill="#1b86d0"/><path d="M663 459.3L673 449.3M662 465.3H678M668 454.3c3 2 5 6 5 10" fill="none" stroke="#1b86d0" stroke-width="1.400"/><ellipse cx="694" cy="457.3" rx="7.800" ry="8.600" fill="none" stroke="#1b86d0" stroke-width="1.800"/><ellipse cx="694" cy="457.3" rx="4.600" ry="5.200" fill="none" stroke="#1b86d0" stroke-width="1.800"/><rect x="710" y="452.8" width="16" height="9" rx="4.500" fill="none" stroke="#1b86d0" stroke-width="1.400"/><circle cx="710" cy="457.3" r="1.200" fill="#e01818"/><circle cx="726" cy="457.3" r="1.200" fill="#e01818"/><circle cx="715" cy="452.8" r="1.200" fill="#e01818"/><circle cx="721" cy="461.8" r="1.200" fill="#e01818"/><circle cx="721" cy="452.8" r="1.200" fill="#e01818"/><path d="M612.7 490l9 -3l9 3l-9 5z" fill="#2a8ad8"/><path d="M621.7 482V491" stroke="#1a9a5a" stroke-width="1.400"/><path d="M616.7 494l10 -6" stroke="#e06060" stroke-width="1" stroke-dasharray="1.500 1"/><path d="M645.7 480L654.2 495a8.500 3 0 0 1 -17 0z" fill="url(#bcone)"/><path d="M662 495c3 -8 6 -7 8 -3s5 2 8.500 -8" fill="none" stroke="#1b86d0" stroke-width="1.300"/><circle cx="662" cy="495" r="1.200" fill="#e01818"/><circle cx="668" cy="488" r="1.200" fill="#e01818"/><circle cx="673" cy="491" r="1.200" fill="#e01818"/><circle cx="678.5" cy="484" r="1.200" fill="#e01818"/><path d="M692 481c5 -2 9 -1 9 2s-4 7 -5 11s-6 5 -9 3s-2 -6 1 -9s1 -5 4 -7z" fill="none" stroke="#1b86d0" stroke-width="1.300"/><circle cx="692" cy="481" r="1.200" fill="#e01818"/><circle cx="701" cy="483" r="1.200" fill="#e01818"/><circle cx="696" cy="494" r="1.200" fill="#e01818"/><circle cx="687" cy="495" r="1.200" fill="#e01818"/><circle cx="689" cy="487" r="1.200" fill="#e01818"/><circle cx="699" cy="489" r="1.200" fill="#e01818"/></svg>
<!-- s_right -->
<div class="ph" style="left:747px;top:77px;width:178px;height:19px;"></div><span class="t" style="top:81.17px;font-size:11.5px;left:750.50px;transform-origin:0 0;transform:scaleX(0.892);color:#484848;">Coordiate Display</span><svg style="left:911.5px;top:82.700px" width="8" height="9"><path d="M.5 .5L7.300 8M7.300 .5L.5 8" stroke="#4a4a4a" stroke-width="1.100"/></svg><div class="pb" style="left:747px;top:96px;width:178px;height:159px;border:1px solid #c8c8c8;border-top:none"></div><div style="left:751px;top:107px;width:26.5px;height:29px;background:#fff;border:1px solid #8c8c8c"></div><span class="t" style="top:108.57px;font-size:26.5px;left:755.03px;transform-origin:50% 0;transform:scaleX(0.914);color:#fff;font-weight:bold;font-family:'Liberation Serif',serif;-webkit-text-stroke:1.1px #2fae78;">X</span><div style="left:780.5px;top:107px;width:110.5px;height:28.5px;background:#000;border:1px solid #8a8a8a;border-top-color:#e8e8e8"></div><div style="left:784.2px;top:120.4px;width:10.5px;height:3.4px;background:#00f078;border-radius:1px"></div><span class="t" style="top:110.82px;font-size:22.3px;left:818.79px;transform-origin:100% 0;transform:scaleX(0.858);color:#00ff1e;font-weight:bold;">0.9575</span><div style="left:893.5px;top:107px;width:26.5px;height:29px;background:#fff;border:1px solid #8c8c8c"></div><span class="t" style="top:110.03px;font-size:14.5px;left:896.50px;transform-origin:0 0;transform:scaleX(0.888);color:#6fc8a0;font-weight:bold;font-family:'Liberation Serif',serif;-webkit-text-stroke:.5px #2fae78;">X</span><span class="t" style="top:114.65px;font-size:14px;left:904.50px;transform-origin:0 0;transform:scaleX(1.414);color:#2fae78;font-weight:bold;">/</span><span class="t" style="top:118.75px;font-size:14px;left:909.30px;transform-origin:0 0;transform:scaleX(1.171);color:#6fc8a0;font-weight:bold;font-family:'Liberation Serif',serif;-webkit-text-stroke:.5px #2fae78;">2</span><div style="left:751px;top:141.7px;width:26.5px;height:29px;background:#fff;border:1px solid #8c8c8c"></div><span class="t" style="top:143.27px;font-size:26.5px;left:755.03px;transform-origin:50% 0;transform:scaleX(0.914);color:#fff;font-weight:bold;font-family:'Liberation Serif',serif;-webkit-text-stroke:1.1px #2fae78;">Y</span><div style="left:780.5px;top:141.7px;width:110.5px;height:28.5px;background:#000;border:1px solid #8a8a8a;border-top-color:#e8e8e8"></div><div style="left:784.2px;top:155.1px;width:10.5px;height:3.4px;background:#00f078;border-radius:1px"></div><span class="t" style="top:145.52px;font-size:22.3px;left:818.79px;transform-origin:100% 0;transform:scaleX(0.858);color:#00ff1e;font-weight:bold;">0.1220</span><div style="left:893.5px;top:141.7px;width:26.5px;height:29px;background:#fff;border:1px solid #8c8c8c"></div><span class="t" style="top:144.73px;font-size:14.5px;left:896.50px;transform-origin:0 0;transform:scaleX(0.888);color:#6fc8a0;font-weight:bold;font-family:'Liberation Serif',serif;-webkit-text-stroke:.5px #2fae78;">Y</span><span class="t" style="top:149.35px;font-size:14px;left:904.50px;transform-origin:0 0;transform:scaleX(1.414);color:#2fae78;font-weight:bold;">/</span><span class="t" style="top:153.45px;font-size:14px;left:909.30px;transform-origin:0 0;transform:scaleX(1.171);color:#6fc8a0;font-weight:bold;font-family:'Liberation Serif',serif;-webkit-text-stroke:.5px #2fae78;">2</span><div style="left:751px;top:176.5px;width:26.5px;height:29px;background:#fff;border:1px solid #8c8c8c"></div><span class="t" style="top:178.07px;font-size:26.5px;left:755.76px;transform-origin:50% 0;transform:scaleX(0.990);color:#fff;font-weight:bold;font-family:'Liberation Serif',serif;-webkit-text-stroke:1.1px #2fae78;">Z</span><div style="left:780.5px;top:176.5px;width:110.5px;height:28.5px;background:#000;border:1px solid #8a8a8a;border-top-color:#e8e8e8"></div><div style="left:784.2px;top:189.9px;width:10.5px;height:3.4px;background:#00f078;border-radius:1px"></div><div style="left:787.8px;top:186.0px;width:3.3px;height:11px;background:#00f078;border-radius:1px"></div><span class="t" style="top:180.32px;font-size:22.3px;left:818.79px;transform-origin:100% 0;transform:scaleX(0.858);color:#00ff1e;font-weight:bold;">0.0000</span><div style="left:893.5px;top:176.5px;width:26.5px;height:29px;background:#fff;border:1px solid #8c8c8c"></div><span class="t" style="top:179.53px;font-size:14.5px;left:896.50px;transform-origin:0 0;transform:scaleX(0.962);color:#6fc8a0;font-weight:bold;font-family:'Liberation Serif',serif;-webkit-text-stroke:.5px #2fae78;">Z</span><span class="t" style="top:184.15px;font-size:14px;left:904.50px;transform-origin:0 0;transform:scaleX(1.414);color:#2fae78;font-weight:bold;">/</span><span class="t" style="top:188.25px;font-size:14px;left:909.30px;transform-origin:0 0;transform:scaleX(1.171);color:#6fc8a0;font-weight:bold;font-family:'Liberation Serif',serif;-webkit-text-stroke:.5px #2fae78;">2</span><div class="ph" style="left:928px;top:77px;width:174.5px;height:19px;"></div><span class="t" style="top:81.17px;font-size:11.5px;left:931.50px;transform-origin:0 0;transform:scaleX(0.909);color:#484848;">Zoom Window-3.0x</span><svg style="left:1089.0px;top:82.700px" width="8" height="9"><path d="M.5 .5L7.300 8M7.300 .5L.5 8" stroke="#4a4a4a" stroke-width="1.100"/></svg><div style="left:928.5px;top:96.5px;width:173.5px;height:158.5px;background:#0d0101;overflow:hidden"><svg style="left:0;top:0" width="173" height="159" viewBox="0 0 173 159"><defs><filter id="zb" x="-20%" y="-20%" width="140%" height="140%"><feGaussianBlur stdDeviation="2.6 1.3"/></filter><filter id="zc" x="-20%" y="-20%" width="140%" height="140%"><feGaussianBlur stdDeviation="1.6 .8"/></filter></defs><g filter="url(#zb)"><path d="M-10 124C35 124 72 138 118 166H-10z" fill="#03150a"/><path d="M-10 129.500C30 129.500 65 141 106 166H-10z" fill="#06331a"/></g><g filter="url(#zc)"><path d="M-10 134.500C20 134.500 40 136 58 143L100 165H-10z" fill="#3cf070"/><path d="M-10 135C22 135 38 136.500 54 142L40 143.500H-10z" fill="#8affd8"/><path d="M-10 147C30 147 55 150 74 155L60 155.500H-10z" fill="#78ffb0" opacity=".6"/></g><path d="M79 78.700h5.500M89 78.700h5.500M86.800 70.200v6M86.800 81.200v6" stroke="#e01020" stroke-width="1.100"/></svg></div><div class="ph" style="left:1106px;top:77px;width:175px;height:19px;"></div><span class="t" style="top:81.17px;font-size:11.5px;left:1109.50px;transform-origin:0 0;transform:scaleX(0.887);color:#484848;">Other</span><svg style="left:1267.5px;top:82.700px" width="8" height="9"><path d="M.5 .5L7.300 8M7.300 .5L.5 8" stroke="#4a4a4a" stroke-width="1.100"/></svg><div class="pb" style="left:1106px;top:96px;width:175px;height:159px;border-left:1px solid #c8c8c8"></div><div style="left:1129px;top:110px;width:33px;height:22.5px;background:linear-gradient(#f4f4f4 0%,#ececec 48%,#dcdcdc 52%,#d2d2d2 100%);border:1px solid #787878;border-radius:3px;box-shadow:inset 0 0 0 1px #fbfbfb;"></div><span class="t" style="top:116.14px;font-size:12px;left:1139.83px;transform-origin:50% 0;transform:scaleX(0.900);color:#000;">X:</span><div style="left:1166.5px;top:109.5px;width:75.5px;height:24px;background:#c0c0c0;border:2px solid #e6e6e6;border-top-color:#a8a8a8;border-left-color:#a8a8a8"></div><span class="t" style="top:112.57px;font-size:11.5px;left:1171.00px;transform-origin:0 0;transform:scaleX(0.860);color:#202020;">0</span><div style="left:1129px;top:141.8px;width:33px;height:22.5px;background:linear-gradient(#f4f4f4 0%,#ececec 48%,#dcdcdc 52%,#d2d2d2 100%);border:1px solid #787878;border-radius:3px;box-shadow:inset 0 0 0 1px #fbfbfb;"></div><span class="t" style="top:147.94px;font-size:12px;left:1140.16px;transform-origin:50% 0;transform:scaleX(0.955);color:#000;">Y:</span><div style="left:1166.5px;top:141.3px;width:75.5px;height:24px;background:#c0c0c0;border:2px solid #e6e6e6;border-top-color:#a8a8a8;border-left-color:#a8a8a8"></div><span class="t" style="top:144.37px;font-size:11.5px;left:1171.00px;transform-origin:0 0;transform:scaleX(0.860);color:#202020;">0</span><div style="left:1129px;top:172.8px;width:33px;height:22.5px;background:linear-gradient(#f4f4f4 0%,#ececec 48%,#dcdcdc 52%,#d2d2d2 100%);border:1px solid #787878;border-radius:3px;box-shadow:inset 0 0 0 1px #fbfbfb;"></div><span class="t" style="top:178.94px;font-size:12px;left:1140.17px;transform-origin:50% 0;transform:scaleX(0.956);color:#000;">Z:</span><div style="left:1166.5px;top:172.3px;width:75.5px;height:24px;background:#c0c0c0;border:2px solid #e6e6e6;border-top-color:#a8a8a8;border-left-color:#a8a8a8"></div><span class="t" style="top:175.37px;font-size:11.5px;left:1171.00px;transform-origin:0 0;transform:scaleX(0.860);color:#202020;">0</span><div style="left:1128px;top:206px;width:10.5px;height:11px;border-radius:50%;background:radial-gradient(#f4f4f4 40%,#cfcfcf);border:1px solid #8a8a8a"></div><span class="t" style="top:205.64px;font-size:12px;left:1142.50px;transform-origin:0 0;transform:scaleX(0.842);color:#000;">Relative</span><div style="left:1193px;top:206px;width:10.5px;height:11px;border-radius:50%;background:radial-gradient(#1a5ea8 0,#2a7ad0 32%,#e8f0f8 45%,#d8d8d8);border:1px solid #7a8a9a"></div><span class="t" style="top:205.64px;font-size:12px;left:1207.70px;transform-origin:0 0;transform:scaleX(0.889);color:#000;">Absolute</span><div style="left:1127.5px;top:223.5px;width:57px;height:22.5px;background:linear-gradient(#eaf5fc 0%,#d8eefb 48%,#bfe2f7 52%,#aad6f0 100%);border:1px solid #2c7fc0;border-radius:3px;box-shadow:inset 0 0 0 1px #5ac8f0;"></div><span class="t" style="top:229.64px;font-size:12px;left:1141.33px;transform-origin:50% 0;transform:scaleX(0.869);color:#000;">Move</span><div style="left:1191.5px;top:223.5px;width:57px;height:22.5px;background:linear-gradient(#f4f4f4 0%,#ececec 48%,#dcdcdc 52%,#d2d2d2 100%);border:1px solid #787878;border-radius:3px;box-shadow:inset 0 0 0 1px #fbfbfb;"></div><span class="t" style="top:229.64px;font-size:12px;left:1207.66px;transform-origin:50% 0;transform:scaleX(0.911);color:#000;">Stop</span><div style="left:747px;top:259px;width:533px;height:28.5px;background:linear-gradient(#dcdee2 0%,#cdd0d5 40%,#b6bac2 58%,#a2a8b1 100%);border-radius:3px 0 0 0"></div><div style="left:892.6px;top:260.5px;width:23px;height:25px;background:linear-gradient(#fde7b0 0%,#fbc260 45%,#f9a838 55%,#fddc8c 100%);border:1px solid #f0c060;"></div><div style="left:1020.5px;top:260.5px;width:22.5px;height:25px;background:linear-gradient(#fde7b0 0%,#fbc260 45%,#f9a838 55%,#fddc8c 100%);border:1px solid #f0c060;"></div><div style="left:1124px;top:264px;width:67.5px;height:18px;background:#fff;border:1px solid #c8ccd0"></div><div style="left:1179px;top:265px;width:11.5px;height:16px;background:linear-gradient(#d8dbdf,#b8bcc2)"></div><svg style="left:1182.500px;top:272px" width="5" height="3"><path d="M0 0h5l-2.500 3z" fill="#505860"/></svg><span class="t" style="top:268.07px;font-size:11.5px;left:1127.50px;transform-origin:0 0;transform:scaleX(0.892);color:#000;">multi-selec</span><svg style="left:747px;top:258px" width="533" height="32" viewBox="747 258 533 32"><path d="M753 275.2L763 264.2M754 282.2H768M759 269.2c3 2 5 6 5 11" fill="none" stroke="#1f9a55" stroke-width="1.300"/><path d="M762.5 277.7l1.600 3.500l1.600 -3.800z" fill="#1f9a55"/><path d="M780.5 267.2L790 279.7M777.5 269.2l6 -4.500M787 281.7l6 -4.500" fill="none" stroke="#1f9a55" stroke-width="1.300"/><path d="M801.3 264.2V282.2M816.3 264.2V282.2M801.8 273.2H815.8" stroke="#1f9a55" stroke-width="1.300" fill="none"/><path d="M801.8 273.2l3.500 -2v4zM815.8 273.2l-3.500 -2v4z" fill="#1f9a55"/><path d="M824.8 264.2H840.8M824.8 282.2H840.8M832.8 265.2V281.2" stroke="#1f9a55" stroke-width="1.300" fill="none"/><path d="M832.8 264.7l-2 3.500h4zM832.8 281.7l-2 -3.500h4z" fill="#1f9a55"/><ellipse cx="857" cy="273.2" rx="7.300" ry="8.200" fill="none" stroke="#1f9a55" stroke-width="1.300"/><path d="M857 273.2L852.5 267.2" stroke="#1f9a55" stroke-width="1.300"/><ellipse cx="879" cy="273.2" rx="7.300" ry="8.200" fill="none" stroke="#1f9a55" stroke-width="1.300"/><path d="M874 279.7L884 266.7" stroke="#1f9a55" stroke-width="1.300"/><path d="M896.5 281.2c0 -8 5 -14 14 -15.500M902.5 283.2c0 -7 3 -11 9.500 -12.500" fill="none" stroke="#1f9a55" stroke-width="1.300"/><circle cx="897.0" cy="281.7" r="1.400" fill="#e02020"/><circle cx="900.5" cy="271.2" r="1.400" fill="#e02020"/><circle cx="910.5" cy="266.2" r="1.400" fill="#e02020"/><rect x="918.600" y="264.2" width="1.400" height="19" fill="#707478"/><path d="M927 268.2v-4h4M939 264.2h4v4M943 278.2v4h-4M931 282.2h-4v-4" fill="none" stroke="#1a3fd0" stroke-width="1.500"/><ellipse cx="936.5" cy="271.2" rx="4" ry="4.500" fill="#f0f6f0" stroke="#1a9a4a" stroke-width="1.500"/><path d="M933.5 275.2l-4.500 5.500" stroke="#1a9a4a" stroke-width="2.200"/><path d="M950.6 268.2v-4h4M962.6 264.2h4v4M966.6 278.2v4h-4M954.6 282.2h-4v-4" fill="none" stroke="#f07a18" stroke-width="1.500"/><text x="958.6" y="279.7" text-anchor="middle" font-size="17" fill="#1a3fd0" font-family="Liberation Sans,sans-serif">A</text><path d="M977.6 276.2a5.500 6.500 0 0 1 6 -9M987.6 270.2a5.500 6.500 0 0 1 -6 9" fill="none" stroke="#1a8a4a" stroke-width="2.600"/><path d="M981.6 263.2l5 3.500l-5 3.500zM983.6 283.2l-5 -3.500l5 -3.500z" fill="#1a8a4a"/><path d="M997.8 273.7C1001.8 266.7 1009.8 266.7 1013.8 273.7C1009.8 279.7 1001.8 279.7 997.8 273.7z" fill="#2c2c2c"/><ellipse cx="1004.8" cy="273.7" rx="3" ry="4.200" fill="#6a5038"/><ellipse cx="1004.8" cy="273.7" rx="1.400" ry="2" fill="#101010"/><path d="M1008.8 270.2l5 3.500l-5 3.500z" fill="#e8e8e8" opacity=".55"/><path d="M998.8 269.2l2 2M1002.8 266.7l1 2.500M1007.8 266.7l-.5 2.500" stroke="#2c2c2c" stroke-width="1"/><path d="M1029 276.2V265.2" stroke="#1a5e92" stroke-width="1.600"/><path d="M1026.5 267.2h5l-2.500 -4z" fill="#1a5e92"/><path d="M1029 276.2H1038" stroke="#e02020" stroke-width="1.600"/><path d="M1036.5 273.7v5l4 -2.500z" fill="#e02020"/><path d="M1029 276.2l-5 5" stroke="#2a9ae0" stroke-width="1.500"/><path d="M1022.5 282.7l4 -.8l-3 -3z" fill="#2a9ae0"/><rect x="1046" y="264.2" width="12" height="13" fill="none" stroke="#3a4ad8" stroke-width="1.200" stroke-dasharray="1.500 1.200"/><ellipse cx="1056" cy="276.2" rx="3.600" ry="4" fill="#e8f4e8" stroke="#2a9a3a" stroke-width="1.400"/><path d="M1058.5 279.2l4 4.500" stroke="#2a9a3a" stroke-width="2"/><text x="1079.700" y="279.2" text-anchor="middle" font-size="15" font-weight="bold" fill="#2030d8" font-family="Liberation Serif,serif" textLength="15" lengthAdjust="spacingAndGlyphs">XY</text><rect x="1093.700" y="264.2" width="1.400" height="19" fill="#707478"/><ellipse cx="1111" cy="273.2" rx="6.600" ry="7.300" fill="none" stroke="#7f89b2" stroke-width="2.400" stroke-dasharray="2.400 1.400"/><ellipse cx="1111" cy="273.2" rx="5" ry="5.600" fill="none" stroke="#8a94ba" stroke-width="2.800"/><rect x="1202.5" y="265.2" width="6" height="8" fill="#5a6068"/><path d="M1197 274.2h4v-3h9v3h3v7h-16z" fill="#2a7ad8"/><rect x="1200" y="271.2" width="10" height="6" fill="#f4f6fa"/></svg>
<!-- s_cad -->
<div style="left:747px;top:287.5px;width:533px;height:549.5px;background:#fff;overflow:hidden"><svg style="left:0;top:0" width="533" height="549.5" viewBox="747 287.5 533 549.5"><defs><linearGradient id="gsh" x1="0" y1="0" x2="1" y2="0"><stop offset="0" stop-color="#0a9a0a"/><stop offset=".45" stop-color="#2aff2a"/><stop offset="1" stop-color="#0a8a0a"/></linearGradient><linearGradient id="rsh" x1="0" y1="0" x2="0" y2="1"><stop offset="0" stop-color="#a00808"/><stop offset=".45" stop-color="#ff2020"/><stop offset="1" stop-color="#8a0606"/></linearGradient><radialGradient id="bsp" cx=".4" cy=".4" r=".7"><stop offset="0" stop-color="#2020e0"/><stop offset="1" stop-color="#00007a"/></radialGradient></defs><g transform="scale(1,1.125)" font-family="Liberation Sans,sans-serif"><path d="M776.8 447.8L1154.5 654.0M1179.6 398.7L1001.6 575.6" stroke="#8c8c8c" stroke-width="1.100"/><circle cx="1001.6" cy="575.6" r="51" fill="none" stroke="#8c8c8c" stroke-width="1.100"/><path d="M1109.1 675.7A50.3 50.3 0 0 1 1167.3 605.4" fill="none" stroke="#8c8c8c" stroke-width="1.100"/><circle cx="1179.6" cy="398.7" r="75.600" fill="none" stroke="#ff8a12" stroke-width="2"/><path d="M1179.6 398.7L1117 336.6L938.700 513.4L1001.6 575.6" fill="none" stroke="#e8484c" stroke-width="1"/><path d="M845.9 417.8L888.0 399.5A121.3 121.3 0 0 1 768.3 568.8L771.5 522.9" fill="none" stroke="#f01414" stroke-width="1.050"/><path d="M845.9 417.8A75.3 75.3 0 0 1 771.5 522.9" fill="none" stroke="#f01414" stroke-width="1.050"/><path d="M845.9 417.8L850.4 424.4L846.5 425.9z" fill="#f01414"/><path d="M771.5 522.9L779.3 520.8L779.3 525.0z" fill="#f01414"/><path d="M888.0 399.5L892.6 406.1L888.7 407.5z" fill="#f01414"/><path d="M768.3 568.8L776.1 566.7L776.1 570.9z" fill="#f01414"/><path d="M1109.1 675.7L1069.3 694.7A94.400 94.400 0 0 1 1178.6 562.8L1167.3 605.4" fill="none" stroke="#f01414" stroke-width="1.050"/><path d="M1069.3 694.7L1064.5 688.2L1068.4 686.7z" fill="#f01414"/><path d="M1178.6 562.8L1170.6 563.4L1171.3 559.3z" fill="#f01414"/><path d="M1119.300 292.9H1161L1166.700 323.1" fill="none" stroke="#f01414" stroke-width="1.050"/><path d="M1166.2 320.9L1162.2 311.4L1166.9 310.6z" fill="#f01414"/><text x="1119.800" y="289.1" font-size="11.500" fill="#f01414" textLength="45" lengthAdjust="spacingAndGlyphs">D2.5679</text><path d="M833.300 625.1H875.700L953.800 595.4" fill="none" stroke="#f01414" stroke-width="1.050"/><path d="M952.5 595.9L944.0 601.7L942.3 597.2z" fill="#f01414"/><text x="834" y="621.2" font-size="11.500" fill="#f01414" textLength="44.200" lengthAdjust="spacingAndGlyphs">D1.7188</text><text transform="translate(1000.4 447.3) rotate(-44)" font-size="11.500" fill="#f01414" textLength="43" lengthAdjust="spacingAndGlyphs">L4.2646</text><text transform="translate(854 476.9) rotate(128)" font-size="11.500" fill="#f01414" textLength="43" lengthAdjust="spacingAndGlyphs">L2.6275</text><text transform="translate(891 503.1) rotate(127)" font-size="11.500" fill="#f01414" textLength="43" lengthAdjust="spacingAndGlyphs">L2.6275</text><text transform="translate(1066 606.7) rotate(-46)" font-size="11.500" fill="#f01414" textLength="43" lengthAdjust="spacingAndGlyphs">L1.9336</text><path d="M1021.400 511.1h6M1024.400 508.4v5.400" stroke="#202020" stroke-width="1"/><rect x="1078.2" y="463.1" width="4.600" height="40.4" fill="url(#gsh)"/><path d="M1074.7 464.0h11.600L1080.5 453.3z" fill="#18e018"/><rect x="1080.5" y="500.9" width="41" height="5.200" fill="url(#rsh)"/><path d="M1120.500 497.5v12L1131 503.5z" fill="#e01010"/><circle cx="1080.5" cy="503.5" r="5.700" fill="url(#bsp)"/><text x="773" y="693.3" font-family="Liberation Serif,serif" font-size="11.500" fill="#101010">Y</text><text x="797.500" y="717.2" font-family="Liberation Serif,serif" font-size="11.500" fill="#101010">X</text><text x="774.500" y="715.6" font-family="Liberation Serif,serif" font-size="10" fill="#303030">Z</text><rect x="771.8" y="700.4" width="3.200" height="17.1" fill="url(#gsh)"/><path d="M769.5 700.9h7.600L773.3 696.0z" fill="#18d818"/><rect x="773.3" y="715.8" width="17" height="3.400" fill="url(#rsh)"/><path d="M789.500 713.5v8L795.300 717.5z" fill="#e01010"/><circle cx="773.3" cy="717.5" r="4.200" fill="url(#bsp)"/></g></svg></div><div style="left:743px;top:256px;width:4px;height:582px;background:#555"></div>
<!-- s_bottom -->
<div class="ph" style="left:1px;top:561.5px;width:217.5px;height:19.5px;"></div><span class="t" style="top:566.07px;font-size:11.5px;left:3.50px;transform-origin:0 0;transform:scaleX(0.853);color:#484848;">Element List</span><svg style="left:206.3px;top:567.7px" width="8" height="9"><path d="M.5 .5L7.300 8M7.300 .5L.5 8" stroke="#4a4a4a" stroke-width="1.100"/></svg><div style="left:0px;top:581px;width:218.5px;height:257px;background:#fff"></div><div style="left:0px;top:581px;width:13.5px;height:96px;background:#c0c0c0"></div><div style="left:14px;top:581px;width:190.5px;height:16px;background:#3399ff"></div><span class="t" style="top:584.17px;font-size:11.5px;left:28.30px;transform-origin:0 0;transform:scaleX(0.718);color:#000;-webkit-text-stroke:.5px #000;">CIR1</span><span class="t" style="top:584.17px;font-size:11.5px;left:90.60px;transform-origin:0 0;transform:scaleX(0.718);color:#000;-webkit-text-stroke:.5px #000;">CIR1</span><span class="t" style="top:584.17px;font-size:11.5px;left:197.90px;transform-origin:100% 0;transform:scaleX(0.860);color:#000;">1</span><div style="left:206.5px;top:583.8px;width:10.5px;height:11px;background:linear-gradient(135deg,#b4b4b4,#ececec);border:1px solid #7c7c7c;box-shadow:inset 0 0 0 1px #e4e4e4"></div><svg style="left:206.5px;top:583.8px" width="10.5" height="11" viewBox="0 0 11 11"><path d="M2.300 5.500L4.600 8.200L9 2.400" fill="none" stroke="#5a5f66" stroke-width="1.700"/></svg><span class="t" style="top:600.12px;font-size:11.5px;left:28.30px;transform-origin:0 0;transform:scaleX(0.744);color:#000;-webkit-text-stroke:.5px #000;">CIR2</span><span class="t" style="top:600.12px;font-size:11.5px;left:90.60px;transform-origin:0 0;transform:scaleX(0.744);color:#000;-webkit-text-stroke:.5px #000;">CIR2</span><span class="t" style="top:600.12px;font-size:11.5px;left:197.90px;transform-origin:100% 0;transform:scaleX(0.860);color:#000;">2</span><div style="left:206.5px;top:599.75px;width:10.5px;height:11px;background:linear-gradient(135deg,#b4b4b4,#ececec);border:1px solid #7c7c7c;box-shadow:inset 0 0 0 1px #e4e4e4"></div><svg style="left:206.5px;top:599.75px" width="10.5" height="11" viewBox="0 0 11 11"><path d="M2.300 5.500L4.600 8.200L9 2.400" fill="none" stroke="#5a5f66" stroke-width="1.700"/></svg><span class="t" style="top:616.07px;font-size:11.5px;left:28.30px;transform-origin:0 0;transform:scaleX(0.799);color:#000;-webkit-text-stroke:.5px #000;">ARC1</span><span class="t" style="top:616.07px;font-size:11.5px;left:90.60px;transform-origin:0 0;transform:scaleX(0.799);color:#000;-webkit-text-stroke:.5px #000;">ARC1</span><span class="t" style="top:616.07px;font-size:11.5px;left:197.90px;transform-origin:100% 0;transform:scaleX(0.860);color:#000;">3</span><div style="left:206.5px;top:615.6999999999999px;width:10.5px;height:11px;background:linear-gradient(135deg,#b4b4b4,#ececec);border:1px solid #7c7c7c;box-shadow:inset 0 0 0 1px #e4e4e4"></div><svg style="left:206.5px;top:615.6999999999999px" width="10.5" height="11" viewBox="0 0 11 11"><path d="M2.300 5.500L4.600 8.200L9 2.400" fill="none" stroke="#5a5f66" stroke-width="1.700"/></svg><span class="t" style="top:632.02px;font-size:11.5px;left:28.30px;transform-origin:0 0;transform:scaleX(0.815);color:#000;-webkit-text-stroke:.5px #000;">ARC2</span><span class="t" style="top:632.02px;font-size:11.5px;left:90.60px;transform-origin:0 0;transform:scaleX(0.815);color:#000;-webkit-text-stroke:.5px #000;">ARC2</span><span class="t" style="top:632.02px;font-size:11.5px;left:197.90px;transform-origin:100% 0;transform:scaleX(0.860);color:#000;">4</span><div style="left:206.5px;top:631.65px;width:10.5px;height:11px;background:linear-gradient(135deg,#b4b4b4,#ececec);border:1px solid #7c7c7c;box-shadow:inset 0 0 0 1px #e4e4e4"></div><svg style="left:206.5px;top:631.65px" width="10.5" height="11" viewBox="0 0 11 11"><path d="M2.300 5.500L4.600 8.200L9 2.400" fill="none" stroke="#5a5f66" stroke-width="1.700"/></svg><span class="t" style="top:647.97px;font-size:11.5px;left:28.30px;transform-origin:0 0;transform:scaleX(0.741);color:#000;-webkit-text-stroke:.5px #000;">LIN1</span><span class="t" style="top:647.97px;font-size:11.5px;left:90.60px;transform-origin:0 0;transform:scaleX(0.805);color:#000;-webkit-text-stroke:.5px #000;">LIN1(Connection # CIR1+</span><span class="t" style="top:647.97px;font-size:11.5px;left:197.90px;transform-origin:100% 0;transform:scaleX(0.860);color:#000;">5</span><div style="left:206.5px;top:647.5999999999999px;width:10.5px;height:11px;background:linear-gradient(135deg,#b4b4b4,#ececec);border:1px solid #7c7c7c;box-shadow:inset 0 0 0 1px #e4e4e4"></div><svg style="left:206.5px;top:647.5999999999999px" width="10.5" height="11" viewBox="0 0 11 11"><path d="M2.300 5.500L4.600 8.200L9 2.400" fill="none" stroke="#5a5f66" stroke-width="1.700"/></svg><span class="t" style="top:663.92px;font-size:11.5px;left:28.30px;transform-origin:0 0;transform:scaleX(0.782);color:#000;-webkit-text-stroke:.5px #000;">LIN2</span><span class="t" style="top:663.92px;font-size:11.5px;left:90.60px;transform-origin:0 0;transform:scaleX(0.810);color:#000;-webkit-text-stroke:.5px #000;">LIN2(ARC1+ARC2)</span><span class="t" style="top:663.92px;font-size:11.5px;left:197.90px;transform-origin:100% 0;transform:scaleX(0.860);color:#000;">6</span><div style="left:206.5px;top:663.55px;width:10.5px;height:11px;background:linear-gradient(135deg,#b4b4b4,#ececec);border:1px solid #7c7c7c;box-shadow:inset 0 0 0 1px #e4e4e4"></div><svg style="left:206.5px;top:663.55px" width="10.5" height="11" viewBox="0 0 11 11"><path d="M2.300 5.500L4.600 8.200L9 2.400" fill="none" stroke="#5a5f66" stroke-width="1.700"/></svg><svg style="left:0;top:581px" width="30" height="100" viewBox="0 581 30 100"><ellipse cx="20.500" cy="589.3" rx="4.600" ry="5.300" fill="#f4f4f8" stroke="#202028" stroke-width="1.300"/><ellipse cx="20.500" cy="589.3" rx="1.100" ry="1.300" fill="#202028"/><ellipse cx="20.500" cy="605.25" rx="4.600" ry="5.300" fill="#f4f4f8" stroke="#202028" stroke-width="1.300"/><ellipse cx="20.500" cy="605.25" rx="1.100" ry="1.300" fill="#202028"/><path d="M17.300 626.1999999999999c0 -6 2 -9 7.500 -10.500" fill="none" stroke="#3a3a58" stroke-width="1.100"/><circle cx="17.300" cy="626.6999999999999" r="1.200" fill="#7a7ab8"/><circle cx="19.800" cy="618.6999999999999" r="1.200" fill="#7a7ab8"/><circle cx="25.300" cy="615.6999999999999" r="1.200" fill="#7a7ab8"/><path d="M17.300 642.15c0 -6 2 -9 7.500 -10.500" fill="none" stroke="#3a3a58" stroke-width="1.100"/><circle cx="17.300" cy="642.65" r="1.200" fill="#7a7ab8"/><circle cx="19.800" cy="634.65" r="1.200" fill="#7a7ab8"/><circle cx="25.300" cy="631.65" r="1.200" fill="#7a7ab8"/><path d="M18.500 656.5999999999999L24 649.0999999999999" fill="none" stroke="#5a5a98" stroke-width="1.100"/><rect x="16.300" y="656.0999999999999" width="3" height="3.200" fill="#e8e8f8" stroke="#7a7ab8" stroke-width=".9"/><rect x="23" y="646.5999999999999" width="3" height="3.200" fill="#e8e8f8" stroke="#7a7ab8" stroke-width=".9"/><path d="M18.500 672.55L24 665.05" fill="none" stroke="#5a5a98" stroke-width="1.100"/><rect x="16.300" y="672.05" width="3" height="3.200" fill="#e8e8f8" stroke="#7a7ab8" stroke-width=".9"/><rect x="23" y="662.55" width="3" height="3.200" fill="#e8e8f8" stroke="#7a7ab8" stroke-width=".9"/></svg><div style="left:13.5px;top:676.5px;width:205px;height:1.3px;background:#1a1a1a"></div><svg style="left:0;top:668px" width="220" height="18" viewBox="0 668 220 18"><defs><linearGradient id="gt" x1="0" y1="0" x2="1" y2="1"><stop offset="0" stop-color="#7cf050"/><stop offset="1" stop-color="#18a818"/></linearGradient></defs><path d="M2.500 670.500V684L12.500 677.500z" fill="url(#gt)"/><path d="M215.500 670.500V684L205.500 677.500z" fill="url(#gt)"/></svg><div class="ph" style="left:222px;top:561.5px;width:521.5px;height:19.5px;"></div><span class="t" style="top:566.07px;font-size:11.5px;left:225.50px;transform-origin:0 0;transform:scaleX(0.859);color:#484848;">Data Display</span><svg style="left:730.8px;top:567.7px" width="8" height="9"><path d="M.5 .5L7.300 8M7.300 .5L.5 8" stroke="#4a4a4a" stroke-width="1.100"/></svg><div class="pb" style="left:222px;top:581px;width:521.5px;height:231.5px;border:1px solid #d0d0d0;border-top:none"></div><div style="left:226px;top:583px;width:500px;height:211.5px;background:#fff"></div><div style="left:226px;top:583.5px;width:88px;height:24.5px;background:linear-gradient(#bccae4 0%,#93a4c6 20%,#6a7ca4 45%,#44557c 58%,#26355a 75%,#18253f 100%);border-right:1px solid #c4cee2"></div><span class="t" style="top:591.29px;font-size:11px;left:250.74px;transform-origin:50% 0;transform:scaleX(0.844);color:#e2e6ee;">Content</span><div style="left:314px;top:583.5px;width:66.69999999999999px;height:24.5px;background:linear-gradient(#bccae4 0%,#93a4c6 20%,#6a7ca4 45%,#44557c 58%,#26355a 75%,#18253f 100%);border-right:1px solid #c4cee2"></div><span class="t" style="top:591.29px;font-size:11px;left:332.06px;transform-origin:50% 0;transform:scaleX(0.883);color:#e2e6ee;">Actual</span><div style="left:380.7px;top:583.5px;width:66.90000000000003px;height:24.5px;background:linear-gradient(#bccae4 0%,#93a4c6 20%,#6a7ca4 45%,#44557c 58%,#26355a 75%,#18253f 100%);border-right:1px solid #c4cee2"></div><span class="t" style="top:591.29px;font-size:11px;left:393.98px;transform-origin:50% 0;transform:scaleX(0.781);color:#e2e6ee;">Nominal</span><div style="left:447.6px;top:583.5px;width:66.79999999999995px;height:24.5px;background:linear-gradient(#bccae4 0%,#93a4c6 20%,#6a7ca4 45%,#44557c 58%,#26355a 75%,#18253f 100%);border-right:1px solid #c4cee2"></div><span class="t" style="top:591.29px;font-size:11px;left:469.08px;transform-origin:50% 0;transform:scaleX(0.818);color:#e2e6ee;">Over</span><div style="left:514.4px;top:583.5px;width:66.60000000000002px;height:24.5px;background:linear-gradient(#bccae4 0%,#93a4c6 20%,#6a7ca4 45%,#44557c 58%,#26355a 75%,#18253f 100%);border-right:1px solid #c4cee2"></div><span class="t" style="top:591.29px;font-size:11px;left:533.64px;transform-origin:50% 0;transform:scaleX(0.836);color:#e2e6ee;">UpTol</span><div style="left:581px;top:583.5px;width:66.39999999999998px;height:24.5px;background:linear-gradient(#bccae4 0%,#93a4c6 20%,#6a7ca4 45%,#44557c 58%,#26355a 75%,#18253f 100%);border-right:1px solid #c4cee2"></div><span class="t" style="top:591.29px;font-size:11px;left:597.08px;transform-origin:50% 0;transform:scaleX(0.920);color:#e2e6ee;">LowTol</span><div style="left:647.4px;top:583.5px;width:48.60000000000002px;height:24.5px;background:linear-gradient(#bccae4 0%,#93a4c6 20%,#6a7ca4 45%,#44557c 58%,#26355a 75%,#18253f 100%);border-right:1px solid #c4cee2"></div><span class="t" style="top:591.29px;font-size:11px;left:658.86px;transform-origin:50% 0;transform:scaleX(0.837);color:#e2e6ee;">State</span><div style="left:696px;top:583.5px;width:29.700000000000045px;height:24.5px;background:linear-gradient(#bccae4 0%,#93a4c6 20%,#6a7ca4 45%,#44557c 58%,#26355a 75%,#18253f 100%);border-right:1px solid #c4cee2"></div><div style="left:0px;top:0px;width:1280px;height:794.5px;overflow:hidden;pointer-events:none"><div style="left:226px;top:623.9px;width:500px;height:1px;background:#f1f1f1"></div><div style="left:229px;top:611.0px;width:10.5px;height:11.5px;background:linear-gradient(135deg,#b4b4b4,#ececec);border:1px solid #7c7c7c;box-shadow:inset 0 0 0 1px #e4e4e4"></div><svg style="left:229px;top:611.0px" width="10.5" height="11.5" viewBox="0 0 11 11"><path d="M2.300 5.500L4.600 8.200L9 2.400" fill="none" stroke="#5a5f66" stroke-width="1.700"/></svg><span class="t" style="top:610.07px;font-size:12.2px;left:242.30px;transform-origin:0 0;transform:scaleX(0.868);color:#101010;-webkit-text-stroke:.25px #101010;">Center X</span><span class="t" style="top:610.07px;font-size:12.2px;left:342.68px;transform-origin:100% 0;transform:scaleX(0.890);color:#101010;-webkit-text-stroke:.25px #101010;">1.6816</span><span class="t" style="top:610.07px;font-size:12.2px;left:409.48px;transform-origin:100% 0;transform:scaleX(0.890);color:#101010;-webkit-text-stroke:.25px #101010;">1.6816</span><span class="t" style="top:610.07px;font-size:12.2px;left:476.28px;transform-origin:100% 0;transform:scaleX(0.890);color:#101010;-webkit-text-stroke:.25px #101010;">0.0000</span><div style="left:226px;top:639.8299999999999px;width:500px;height:1px;background:#f1f1f1"></div><div style="left:229px;top:626.93px;width:10.5px;height:11.5px;background:linear-gradient(135deg,#b4b4b4,#ececec);border:1px solid #7c7c7c;box-shadow:inset 0 0 0 1px #e4e4e4"></div><svg style="left:229px;top:626.93px" width="10.5" height="11.5" viewBox="0 0 11 11"><path d="M2.300 5.500L4.600 8.200L9 2.400" fill="none" stroke="#5a5f66" stroke-width="1.700"/></svg><span class="t" style="top:626.00px;font-size:12.2px;left:242.30px;transform-origin:0 0;transform:scaleX(0.872);color:#101010;-webkit-text-stroke:.25px #101010;">Center Y</span><span class="t" style="top:626.00px;font-size:12.2px;left:342.68px;transform-origin:100% 0;transform:scaleX(0.890);color:#101010;-webkit-text-stroke:.25px #101010;">1.7768</span><span class="t" style="top:626.00px;font-size:12.2px;left:409.48px;transform-origin:100% 0;transform:scaleX(0.890);color:#101010;-webkit-text-stroke:.25px #101010;">1.7768</span><span class="t" style="top:626.00px;font-size:12.2px;left:476.28px;transform-origin:100% 0;transform:scaleX(0.890);color:#101010;-webkit-text-stroke:.25px #101010;">0.0000</span><div style="left:226px;top:655.76px;width:500px;height:1px;background:#f1f1f1"></div><div style="left:229px;top:642.86px;width:10.5px;height:11.5px;background:linear-gradient(135deg,#b4b4b4,#ececec);border:1px solid #7c7c7c;box-shadow:inset 0 0 0 1px #e4e4e4"></div><span class="t" style="top:641.93px;font-size:12.2px;left:242.30px;transform-origin:0 0;transform:scaleX(0.874);color:#101010;-webkit-text-stroke:.25px #101010;">Center Z</span><span class="t" style="top:641.93px;font-size:12.2px;left:342.68px;transform-origin:100% 0;transform:scaleX(0.890);color:#101010;-webkit-text-stroke:.25px #101010;">0.0000</span><span class="t" style="top:641.93px;font-size:12.2px;left:409.48px;transform-origin:100% 0;transform:scaleX(0.890);color:#101010;-webkit-text-stroke:.25px #101010;">0.0000</span><span class="t" style="top:641.93px;font-size:12.2px;left:476.28px;transform-origin:100% 0;transform:scaleX(0.890);color:#101010;-webkit-text-stroke:.25px #101010;">0.0000</span><div style="left:226px;top:671.6899999999999px;width:500px;height:1px;background:#f1f1f1"></div><div style="left:229px;top:658.79px;width:10.5px;height:11.5px;background:linear-gradient(135deg,#b4b4b4,#ececec);border:1px solid #7c7c7c;box-shadow:inset 0 0 0 1px #e4e4e4"></div><span class="t" style="top:657.86px;font-size:12.2px;left:242.30px;transform-origin:0 0;transform:scaleX(0.895);color:#101010;-webkit-text-stroke:.25px #101010;">Radius</span><span class="t" style="top:657.86px;font-size:12.2px;left:342.68px;transform-origin:100% 0;transform:scaleX(0.890);color:#101010;-webkit-text-stroke:.25px #101010;">1.2839</span><span class="t" style="top:657.86px;font-size:12.2px;left:409.48px;transform-origin:100% 0;transform:scaleX(0.890);color:#101010;-webkit-text-stroke:.25px #101010;">1.2839</span><span class="t" style="top:657.86px;font-size:12.2px;left:476.28px;transform-origin:100% 0;transform:scaleX(0.890);color:#101010;-webkit-text-stroke:.25px #101010;">0.0000</span><div style="left:226px;top:687.62px;width:500px;height:1px;background:#f1f1f1"></div><div style="left:229px;top:674.72px;width:10.5px;height:11.5px;background:linear-gradient(135deg,#b4b4b4,#ececec);border:1px solid #7c7c7c;box-shadow:inset 0 0 0 1px #e4e4e4"></div><span class="t" style="top:673.79px;font-size:12.2px;left:242.30px;transform-origin:0 0;transform:scaleX(0.909);color:#101010;-webkit-text-stroke:.25px #101010;">Diameter</span><span class="t" style="top:673.79px;font-size:12.2px;left:342.68px;transform-origin:100% 0;transform:scaleX(0.890);color:#101010;-webkit-text-stroke:.25px #101010;">2.5679</span><span class="t" style="top:673.79px;font-size:12.2px;left:409.48px;transform-origin:100% 0;transform:scaleX(0.890);color:#101010;-webkit-text-stroke:.25px #101010;">2.5679</span><span class="t" style="top:673.79px;font-size:12.2px;left:476.28px;transform-origin:100% 0;transform:scaleX(0.890);color:#101010;-webkit-text-stroke:.25px #101010;">0.0000</span><div style="left:226px;top:703.55px;width:500px;height:1px;background:#f1f1f1"></div><div style="left:229px;top:690.65px;width:10.5px;height:11.5px;background:linear-gradient(135deg,#b4b4b4,#ececec);border:1px solid #7c7c7c;box-shadow:inset 0 0 0 1px #e4e4e4"></div><span class="t" style="top:689.72px;font-size:12.2px;left:242.30px;transform-origin:0 0;transform:scaleX(0.898);color:#101010;-webkit-text-stroke:.25px #101010;">Perimeter</span><span class="t" style="top:689.72px;font-size:12.2px;left:342.68px;transform-origin:100% 0;transform:scaleX(0.890);color:#101010;-webkit-text-stroke:.25px #101010;">8.0674</span><span class="t" style="top:689.72px;font-size:12.2px;left:409.48px;transform-origin:100% 0;transform:scaleX(0.890);color:#101010;-webkit-text-stroke:.25px #101010;">8.0674</span><span class="t" style="top:689.72px;font-size:12.2px;left:476.28px;transform-origin:100% 0;transform:scaleX(0.890);color:#101010;-webkit-text-stroke:.25px #101010;">0.0000</span><div style="left:226px;top:719.48px;width:500px;height:1px;background:#f1f1f1"></div><div style="left:229px;top:706.58px;width:10.5px;height:11.5px;background:linear-gradient(135deg,#b4b4b4,#ececec);border:1px solid #7c7c7c;box-shadow:inset 0 0 0 1px #e4e4e4"></div><span class="t" style="top:705.65px;font-size:12.2px;left:242.30px;transform-origin:0 0;transform:scaleX(0.873);color:#101010;-webkit-text-stroke:.25px #101010;">Area</span><span class="t" style="top:705.65px;font-size:12.2px;left:342.68px;transform-origin:100% 0;transform:scaleX(0.890);color:#101010;-webkit-text-stroke:.25px #101010;">5.1791</span><span class="t" style="top:705.65px;font-size:12.2px;left:409.48px;transform-origin:100% 0;transform:scaleX(0.890);color:#101010;-webkit-text-stroke:.25px #101010;">5.1791</span><span class="t" style="top:705.65px;font-size:12.2px;left:476.28px;transform-origin:100% 0;transform:scaleX(0.890);color:#101010;-webkit-text-stroke:.25px #101010;">0.0000</span><div style="left:226px;top:735.41px;width:500px;height:1px;background:#f1f1f1"></div><div style="left:229px;top:722.51px;width:10.5px;height:11.5px;background:linear-gradient(135deg,#b4b4b4,#ececec);border:1px solid #7c7c7c;box-shadow:inset 0 0 0 1px #e4e4e4"></div><span class="t" style="top:721.58px;font-size:12.2px;left:242.30px;transform-origin:0 0;transform:scaleX(0.899);color:#101010;-webkit-text-stroke:.25px #101010;">Normal L</span><span class="t" style="top:721.58px;font-size:12.2px;left:342.68px;transform-origin:100% 0;transform:scaleX(0.890);color:#101010;-webkit-text-stroke:.25px #101010;">0.0000</span><span class="t" style="top:721.58px;font-size:12.2px;left:409.48px;transform-origin:100% 0;transform:scaleX(0.890);color:#101010;-webkit-text-stroke:.25px #101010;">0.0000</span><span class="t" style="top:721.58px;font-size:12.2px;left:476.28px;transform-origin:100% 0;transform:scaleX(0.890);color:#101010;-webkit-text-stroke:.25px #101010;">0.0000</span><div style="left:226px;top:751.34px;width:500px;height:1px;background:#f1f1f1"></div><div style="left:229px;top:738.44px;width:10.5px;height:11.5px;background:linear-gradient(135deg,#b4b4b4,#ececec);border:1px solid #7c7c7c;box-shadow:inset 0 0 0 1px #e4e4e4"></div><span class="t" style="top:737.51px;font-size:12.2px;left:242.30px;transform-origin:0 0;transform:scaleX(0.889);color:#101010;-webkit-text-stroke:.25px #101010;">Normal M</span><span class="t" style="top:737.51px;font-size:12.2px;left:342.68px;transform-origin:100% 0;transform:scaleX(0.890);color:#101010;-webkit-text-stroke:.25px #101010;">0.0000</span><span class="t" style="top:737.51px;font-size:12.2px;left:409.48px;transform-origin:100% 0;transform:scaleX(0.890);color:#101010;-webkit-text-stroke:.25px #101010;">0.0000</span><span class="t" style="top:737.51px;font-size:12.2px;left:476.28px;transform-origin:100% 0;transform:scaleX(0.890);color:#101010;-webkit-text-stroke:.25px #101010;">0.0000</span><div style="left:226px;top:767.27px;width:500px;height:1px;background:#f1f1f1"></div><div style="left:229px;top:754.37px;width:10.5px;height:11.5px;background:linear-gradient(135deg,#b4b4b4,#ececec);border:1px solid #7c7c7c;box-shadow:inset 0 0 0 1px #e4e4e4"></div><span class="t" style="top:753.44px;font-size:12.2px;left:242.30px;transform-origin:0 0;transform:scaleX(0.893);color:#101010;-webkit-text-stroke:.25px #101010;">Normal N</span><span class="t" style="top:753.44px;font-size:12.2px;left:338.62px;transform-origin:100% 0;transform:scaleX(0.894);color:#101010;-webkit-text-stroke:.25px #101010;">-1.0000</span><span class="t" style="top:753.44px;font-size:12.2px;left:405.42px;transform-origin:100% 0;transform:scaleX(0.894);color:#101010;-webkit-text-stroke:.25px #101010;">-1.0000</span><span class="t" style="top:753.44px;font-size:12.2px;left:476.28px;transform-origin:100% 0;transform:scaleX(0.890);color:#101010;-webkit-text-stroke:.25px #101010;">0.0000</span><div style="left:226px;top:783.1999999999999px;width:500px;height:1px;background:#f1f1f1"></div><div style="left:229px;top:770.3px;width:10.5px;height:11.5px;background:linear-gradient(135deg,#b4b4b4,#ececec);border:1px solid #7c7c7c;box-shadow:inset 0 0 0 1px #e4e4e4"></div><span class="t" style="top:769.37px;font-size:12.2px;left:242.30px;transform-origin:0 0;transform:scaleX(0.823);color:#101010;-webkit-text-stroke:.25px #101010;">+T</span><span class="t" style="top:769.37px;font-size:12.2px;left:342.68px;transform-origin:100% 0;transform:scaleX(0.890);color:#101010;-webkit-text-stroke:.25px #101010;">0.0064</span><span class="t" style="top:769.37px;font-size:12.2px;left:409.48px;transform-origin:100% 0;transform:scaleX(0.890);color:#101010;-webkit-text-stroke:.25px #101010;">0.0064</span><span class="t" style="top:769.37px;font-size:12.2px;left:476.28px;transform-origin:100% 0;transform:scaleX(0.890);color:#101010;-webkit-text-stroke:.25px #101010;">0.0000</span><div style="left:226px;top:799.13px;width:500px;height:1px;background:#f1f1f1"></div><div style="left:229px;top:786.23px;width:10.5px;height:11.5px;background:linear-gradient(135deg,#b4b4b4,#ececec);border:1px solid #7c7c7c;box-shadow:inset 0 0 0 1px #e4e4e4"></div><span class="t" style="top:785.30px;font-size:12.2px;left:242.30px;transform-origin:0 0;transform:scaleX(0.912);color:#101010;-webkit-text-stroke:.25px #101010;">-T</span><span class="t" style="top:785.30px;font-size:12.2px;left:342.68px;transform-origin:100% 0;transform:scaleX(0.890);color:#101010;-webkit-text-stroke:.25px #101010;">0.0053</span><span class="t" style="top:785.30px;font-size:12.2px;left:409.48px;transform-origin:100% 0;transform:scaleX(0.890);color:#101010;-webkit-text-stroke:.25px #101010;">0.0053</span><span class="t" style="top:785.30px;font-size:12.2px;left:476.28px;transform-origin:100% 0;transform:scaleX(0.890);color:#101010;-webkit-text-stroke:.25px #101010;">0.0000</span><div style="left:313.5px;top:608.5px;width:1px;height:186px;background:#ededed"></div><div style="left:380.2px;top:608.5px;width:1px;height:186px;background:#ededed"></div><div style="left:447.1px;top:608.5px;width:1px;height:186px;background:#ededed"></div><div style="left:513.9px;top:608.5px;width:1px;height:186px;background:#ededed"></div><div style="left:580.5px;top:608.5px;width:1px;height:186px;background:#ededed"></div><div style="left:646.9px;top:608.5px;width:1px;height:186px;background:#ededed"></div><div style="left:695.5px;top:608.5px;width:1px;height:186px;background:#ededed"></div></div><div style="left:725.7px;top:583px;width:15.8px;height:211.5px;background:#f0f0f0;border-left:1px solid #e0e0e0"></div><div style="left:727px;top:601.5px;width:13.5px;height:119px;background:linear-gradient(90deg,#f6f6f6,#dcdcdc);border:1px solid #9a9a9a;border-radius:2px"></div><svg style="left:725px;top:583px" width="17" height="212" viewBox="725 583 17 212"><path d="M730.500 594h6.500l-3.250 -4.500zM730.500 783.500h6.500l-3.250 4.500z" fill="#4a4a4a"/><path d="M731 658.500h5.500M731 661h5.500M731 663.500h5.500" stroke="#6a6a6a" stroke-width="1"/></svg><div style="left:226px;top:796.3px;width:515.5px;height:13.5px;background:#4e4e4e;border:1px solid #d8d8d8"></div><div style="left:229px;top:798px;width:9.5px;height:10px;background:#e8eef8;border:1px solid #a0a8b8"></div><svg style="left:229px;top:798px" width="10" height="10" viewBox="0 0 10 10"><path d="M2.500 5L4.300 7.500L7.800 2.200" fill="none" stroke="#2a4ad0" stroke-width="1.300"/></svg><span class="t" style="top:797.57px;font-size:11.5px;left:242.00px;transform-origin:0 0;transform:scaleX(0.873);color:#161616;">Show All</span><div style="left:225.5px;top:813px;width:65px;height:20px;background:linear-gradient(#f2f3f4,#fbfbfc);border-radius:0 0 4px 4px"></div><span class="t" style="top:819.47px;font-size:11.5px;left:229.50px;transform-origin:0 0;transform:scaleX(0.882);color:#000;">Data Display</span><span class="t" style="top:819.47px;font-size:11.5px;left:297.80px;transform-origin:0 0;transform:scaleX(0.851);color:#fff;">Element Copy</span><span class="t" style="top:819.47px;font-size:11.5px;left:371.80px;transform-origin:0 0;transform:scaleX(0.885);color:#fff;">Position Tolerance</span><span class="t" style="top:819.47px;font-size:11.5px;left:466.50px;transform-origin:0 0;transform:scaleX(0.892);color:#fff;">Image Navigation</span><div style="left:0px;top:837px;width:1280px;height:19.5px;background:linear-gradient(#454952 0%,#3c3f46 38%,#2b2b2e 45%,#252527 100%)"></div><div style="left:736.5px;top:840px;width:1px;height:15px;background:#6e6e6e"></div><div style="left:831px;top:840px;width:1px;height:15px;background:#6e6e6e"></div><div style="left:925px;top:840px;width:1px;height:15px;background:#6e6e6e"></div><div style="left:1018.5px;top:840px;width:1px;height:15px;background:#6e6e6e"></div><div style="left:1112.5px;top:840px;width:1px;height:15px;background:#6e6e6e"></div><div style="left:1162.5px;top:840px;width:1px;height:15px;background:#6e6e6e"></div><div style="left:1230px;top:840px;width:1px;height:15px;background:#6e6e6e"></div><span class="t" style="top:842.47px;font-size:11.5px;left:739.00px;transform-origin:0 0;transform:scaleX(0.846);color:#f0f0f0;">0:00:00:00</span><span class="t" style="top:842.47px;font-size:11.5px;left:834.00px;transform-origin:0 0;transform:scaleX(0.813);color:#e8b81c;">0.7</span><span class="t" style="top:842.47px;font-size:11.5px;left:928.50px;transform-origin:0 0;transform:scaleX(0.900);color:#e8b81c;">Probe unsettled</span><span class="t" style="top:842.47px;font-size:11.5px;left:1022.50px;transform-origin:0 0;transform:scaleX(0.783);color:#e8b81c;">WCS</span><span class="t" style="top:842.47px;font-size:11.5px;left:1116.50px;transform-origin:0 0;transform:scaleX(0.835);color:#f0f0f0;">mm</span><span class="t" style="top:842.47px;font-size:11.5px;left:1166.50px;transform-origin:0 0;transform:scaleX(0.822);color:#f0f0f0;">DMS</span><span class="t" style="top:842.47px;font-size:11.5px;left:1234.00px;transform-origin:0 0;transform:scaleX(0.754);color:#f0f0f0;">CARTESIAN</span><div style="left:0px;top:856.5px;width:1280px;height:8px;background:linear-gradient(90deg,#2e70b6 0%,#2e70b6 17%,#3a88cc 30%,#3682c8 44%,#2860a8 60%,#1e4e90 68%,#2c68b0 72.500%,#1d4a88 77%,#1a3f78 100%);border-top:1px solid #5a8ac4"></div><div style="left:10px;top:858.5px;width:27px;height:12px;border-radius:50%;background:radial-gradient(#eef4fa,#9ab8d8)"></div><div style="left:82px;top:860px;width:12px;height:6px;border-radius:50% 50% 0 0;border:1.5px solid #e8b040;border-bottom:none"></div><div style="left:121px;top:861.5px;width:10px;height:4px;background:#e8c878"></div><div style="left:218.5px;top:858px;width:52px;height:8px;background:linear-gradient(#f4f8fc,#dfe8f2);border:1px solid #8aaed4;border-radius:3px 3px 0 0"></div><div style="left:273.5px;top:858px;width:52px;height:8px;background:linear-gradient(#f4f8fc,#cfdcea);border:1px solid #8aaed4;border-radius:3px 3px 0 0"></div><div style="left:328.5px;top:858px;width:52px;height:8px;background:linear-gradient(#f4f8fc,#c8d4e4);border:1px solid #8aaed4;border-radius:3px 3px 0 0"></div><div style="left:232px;top:861.5px;width:18px;height:4px;background:#c8ccd4;border-radius:2px 2px 0 0"></div><div style="left:287px;top:861px;width:9px;height:4px;background:#2a7ad0"></div><div style="left:301px;top:861px;width:9px;height:4px;background:#2a7ad0"></div><div style="left:341px;top:860.5px;width:26px;height:5px;background:#e8821c;border-top:1px solid #a85008"></div><div style="left:1264px;top:859px;width:16px;height:6px;background:#8aa8c8;border:1px solid #c8d8e8"></div><span class="t" style="top:860.69px;font-size:11px;left:1208.00px;transform-origin:0 0;transform:scaleX(0.986);color:#fff;">| ⁄  11:34</span></div></body></html>
